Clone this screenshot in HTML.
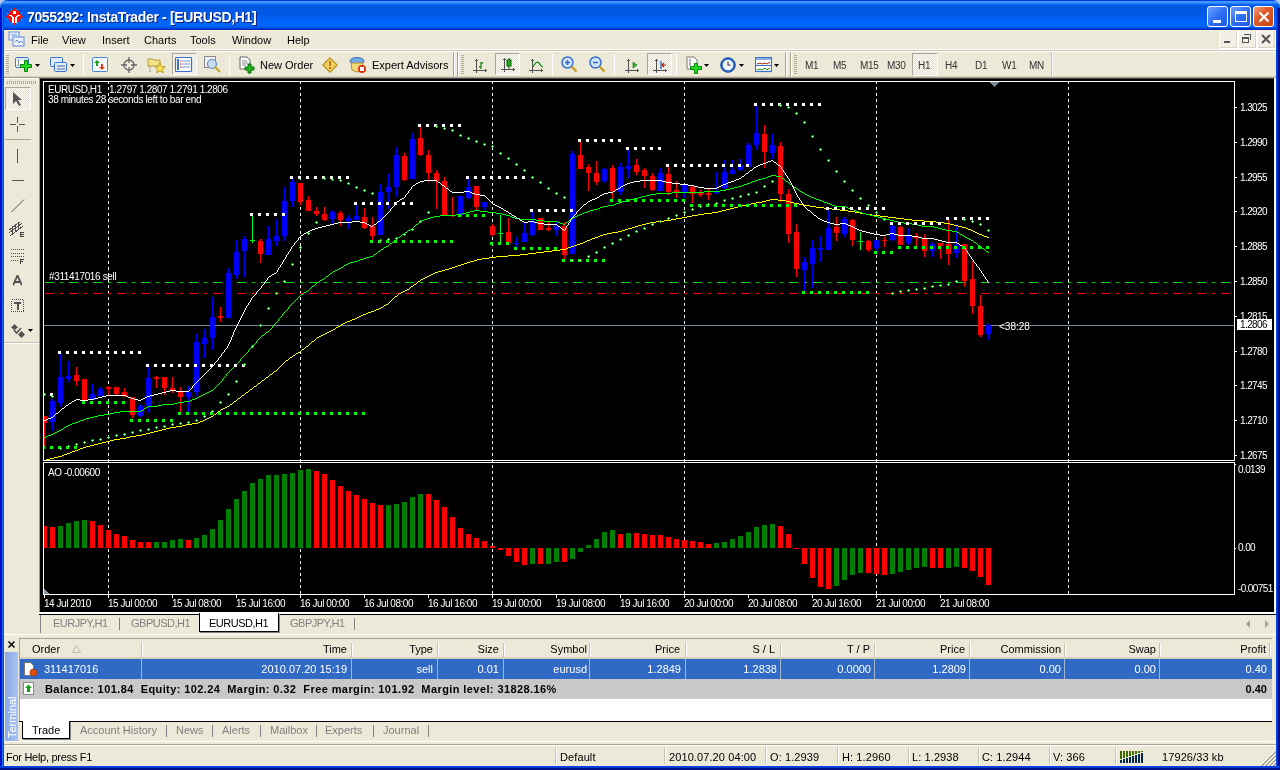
<!DOCTYPE html>
<html><head><meta charset="utf-8">
<style>
*{box-sizing:border-box}
html,body{margin:0;padding:0;width:1280px;height:770px;overflow:hidden;background:#ECE9D8;font-family:"Liberation Sans",sans-serif;font-size:11px;color:#000}
.a{position:absolute}
#title{left:0;top:0;width:1280px;height:30px;border-radius:7px 7px 0 0;background:linear-gradient(#0040E0 0,#0040E0 1px,#3D95FF 1px,#3D95FF 3px,#0A6AF8 4px,#0058E0 6px,#0058E6 14px,#0064F8 20px,#0066FF 26px,#0050E8 28px,#0030C0 29px,#0028B8 30px)}
#title .t{left:27px;top:9px;color:#fff;font-weight:bold;font-size:14px;letter-spacing:-0.35px;text-shadow:1px 1px 0 #0A1E7A;white-space:nowrap}
.wb{border:1px solid #fff;border-radius:3px;width:21px;height:21px;top:6px}
.bl{background:linear-gradient(135deg,#6CA0FF 0%,#2D6FF5 50%,#1E5BE0 100%)}
.frL{left:0;top:8px;width:4px;height:762px;background:linear-gradient(90deg,#0010D0 0 2px,#1A6AF0 2px 3px,#0050E0 3px 4px)}
.frR{left:1276px;top:8px;width:4px;height:762px;background:linear-gradient(90deg,#0048F0 0 1px,#0030C0 1px 2px,#001088 2px 4px)}
.frB{left:0;top:766px;width:1280px;height:4px;background:linear-gradient(#0048F0 0 1px,#0038D8 1px 2px,#001088 2px 4px)}
.menu span{position:absolute;top:34px;font-size:11px}
.tb{white-space:nowrap}
.sep{width:1px;height:22px;background:#C5C2B2;border-right:1px solid #fff;top:54px}
.grip{width:3px;height:19px;top:55px;background:repeating-linear-gradient(#B0AC98 0 1px,transparent 1px 2px)}
.pressed{background:repeating-conic-gradient(#FAF9F4 0 25%,#E6E3D6 0 50%) 0 0/2px 2px;border-top:1px solid #ACA899;border-left:1px solid #ACA899;border-bottom:1px solid #fff;border-right:1px solid #fff}
.tf{font-size:11px;color:#000;top:59px}
.gt{color:#808080}
.th span,.tr span{position:absolute;text-align:right;white-space:nowrap}
</style></head><body><div id="wrap" style="position:absolute;left:0;top:0;width:1280px;height:770px;will-change:transform">
<!-- title bar --><div class="a" style="left:0;top:0;width:9px;height:9px;background:#B8C8E8"></div><div class="a" style="left:1271px;top:0;width:9px;height:9px;background:#B8C8E8"></div>
<div class="a" id="title">
 <svg class="a" style="left:6px;top:8px" width="17" height="17" viewBox="0 0 17 17" shape-rendering="crispEdges"><g fill="#F81000"><path d="M5 2h7v1h1v1h1v2h1v5h-1v2h-1v1h-1v1H5v-1H4v-1H3v-2H2V6h1V4h1V3h1z"/><path d="M8 0h1v2H8zM8 15h1v2H8zM0 8h2v1H0zM15 8h2v1h-2zM3 2h1v1H3zM13 2h1v1h-1zM3 14h1v1H3zM13 14h1v1h-1z"/></g><g fill="#FF7A20"><path d="M1 5h1v1H1zM15 5h1v1h-1zM1 11h1v1H1zM15 11h1v1h-1zM5 1h1v1H5zM11 1h1v1h-1zM5 15h1v1H5zM11 15h1v1h-1z"/></g><rect x="7" y="3" width="3" height="3" fill="#fff"/><path d="M3 7h3v1h1v1h1v6H6V9H5V8H3zM14 7h-3v1h-1v1H9v6h2V9h1V8h2z" fill="#fff"/></svg>
 <div class="a t">7055292: InstaTrader - [EURUSD,H1]</div>
 <div class="a wb bl" style="left:1207px"><div class="a" style="left:5px;top:13px;width:8px;height:3px;background:#fff"></div></div>
 <div class="a wb bl" style="left:1230px"><div class="a" style="left:4px;top:4px;width:12px;height:11px;border:1px solid #fff;border-top:3px solid #fff"></div></div>
 <div class="a wb" style="left:1253px;background:linear-gradient(135deg,#F0A080 0%,#E05A2A 40%,#C8400F 100%)"><svg class="a" style="left:4px;top:4px" width="12" height="12"><path d="M1.5 1.5L10.5 10.5M10.5 1.5L1.5 10.5" stroke="#fff" stroke-width="2.2"/></svg></div>
</div>
<div class="a frL"></div><div class="a frR"></div><div class="a frB"></div>
<!-- menu bar -->
<div class="a" style="left:4px;top:30px;width:1272px;height:19px;background:#ECE9D8;border-top:1px solid #FFF4D8"></div>
<div class="a" style="left:4px;top:49px;width:1272px;height:1px;background:#fff"></div><div class="a" style="left:4px;top:50px;width:1272px;height:1px;background:#C9C4B0"></div><div class="a" style="left:4px;top:51px;width:1272px;height:1px;background:#fff"></div>
<svg class="a" style="left:8px;top:31px" width="18" height="17"><rect x="1" y="1" width="10" height="8" fill="#EAF2FF" stroke="#5C8AD8"/><rect x="5" y="6" width="11" height="9" fill="#EAF2FF" stroke="#5C8AD8"/><path d="M7 11l2-2 2 3 2-2 2 2" stroke="#5C8AD8" fill="none"/><path d="M3 4h6" stroke="#5C8AD8"/></svg>
<div class="menu">
 <span style="left:31px">File</span><span style="left:62px">View</span><span style="left:102px">Insert</span><span style="left:144px">Charts</span><span style="left:190px">Tools</span><span style="left:232px">Window</span><span style="left:287px">Help</span>
</div>
<!-- mdi buttons -->
<div class="a" style="left:1219px;top:31px;width:57px;height:18px;background:#fff"></div>
<div class="a" style="left:1220px;top:31px;width:17px;height:17px;background:#F1EFE6;border-right:1px solid #D9D5C5;border-bottom:1px solid #D9D5C5"></div>
<div class="a" style="left:1239px;top:31px;width:17px;height:17px;background:#F1EFE6;border-right:1px solid #D9D5C5;border-bottom:1px solid #D9D5C5"></div>
<div class="a" style="left:1258px;top:31px;width:17px;height:17px;background:#F1EFE6;border-right:1px solid #D9D5C5;border-bottom:1px solid #D9D5C5"></div>
<svg class="a" style="left:1220px;top:31px" width="56" height="17" shape-rendering="crispEdges"><rect x="4" y="10" width="6" height="2" fill="#555"/>
<path d="M24 3h7v6h-1V4h-6z" fill="#555"/><rect x="22.5" y="6.5" width="6" height="5" fill="none" stroke="#555"/><rect x="22" y="6" width="7" height="2" fill="#555"/>
<path d="M42 4l8 8M50 4l-8 8" stroke="#555" stroke-width="2" shape-rendering="auto"/></svg>
<!-- toolbar -->
<div class="a" style="left:4px;top:52px;width:1272px;height:25px;background:#ECE9D8;border-bottom:1px solid #D8D2BD"></div>
<div class="a grip" style="left:6px"></div><svg class="a" style="left:15px;top:57px" width="18" height="16"><rect x="0.5" y="0.5" width="13" height="10" rx="1.5" fill="#fff" stroke="#3A78D0"/><rect x="1" y="1" width="12" height="2" fill="#D8E6F8"/><path d="M3.5 3v6M2.5 4l1-1 1 1M2.5 8l1 1 1-1" stroke="#7A90B0" fill="none"/><path d="M9.5 3.5h3v4h4v3h-4v4h-3v-4h-4v-3h4z" fill="#22E022" stroke="#0A800A" stroke-width="1"/></svg><svg class="a" style="left:35px;top:64px" width="5" height="3"><path d="M0 0h5l-2.5 3z" fill="#000"/></svg><svg class="a" style="left:50px;top:57px" width="18" height="16"><rect x="0.5" y="0.5" width="12" height="9" rx="1" fill="#DDEBFB" stroke="#3A72C9"/><rect x="4.5" y="5.5" width="12" height="9" rx="1" fill="#DDEBFB" stroke="#3A72C9"/><path d="M7 9h8M7 12h8" stroke="#4A6A9A"/></svg><svg class="a" style="left:70px;top:64px" width="5" height="3"><path d="M0 0h5l-2.5 3z" fill="#000"/></svg><div class="a sep" style="left:83px"></div><svg class="a" style="left:92px;top:57px" width="17" height="16"><rect x="0.5" y="0.5" width="15" height="14" rx="1" fill="#F4F8FF" stroke="#4C86D8"/><path d="M5 3l3 3H6v3H4V6H2z" fill="#18A018"/><path d="M10 13l-3-3h2V7h2v3h2z" fill="#E04020"/></svg><svg class="a" style="left:121px;top:57px" width="16" height="16"><circle cx="8" cy="8" r="5" fill="none" stroke="#666" stroke-width="1.3"/><path d="M8 0v6M8 10v6M0 8h6M10 8h6" stroke="#666" stroke-width="1.3"/></svg><svg class="a" style="left:147px;top:56px" width="19" height="18"><path d="M1 3h5l1 1h6v6H1z" fill="#F5E08A" stroke="#B59A3A"/><path d="M3 11v6" stroke="#666" stroke-dasharray="1 1"/><path d="M13 7l1.6 3.4 3.6.4-2.7 2.4.8 3.6-3.3-1.9-3.3 1.9.8-3.6-2.7-2.4 3.6-.4z" fill="#F8E050" stroke="#B08A10" stroke-width=".8"/></svg><div class="a pressed" style="left:172px;top:53px;width:25px;height:22px"></div><svg class="a" style="left:175px;top:57px" width="18" height="16"><rect x="0.5" y="0.5" width="16" height="14" rx="1" fill="#fff" stroke="#3A72C9" stroke-width="1.2"/><rect x="2" y="2" width="2" height="11" fill="#3A72C9"/><path d="M6 4h9M6 7h9M6 10h9" stroke="#7A9AD0"/><path d="M5 4h1M5 7h1M5 10h1" stroke="#D02020"/></svg><svg class="a" style="left:204px;top:56px" width="18" height="18"><rect x="0.5" y="0.5" width="11" height="11" fill="#EEF" stroke="#888"/><circle cx="8" cy="8" r="4.5" fill="#C8DAF0" stroke="#6A8AB8" stroke-width="1.2"/><path d="M11 11l5 5" stroke="#C8A020" stroke-width="2"/></svg><div class="a sep" style="left:229px"></div><svg class="a" style="left:239px;top:56px" width="17" height="18"><path d="M1 1h7l3 3v9H1z" fill="#fff" stroke="#666"/><path d="M3 5h5M3 7h6M3 9h4" stroke="#888"/><path d="M9 8h3v3h3v3h-3v3H9v-3H6v-3h3z" fill="#1DB31D" stroke="#0A700A"/></svg><div class="a tf" style="left:260px">New Order</div><svg class="a" style="left:322px;top:57px" width="16" height="16"><path d="M8 0.8L15.2 8 8 15.2 0.8 8z" fill="#F2D060" stroke="#B8901A" stroke-width="1.2"/><path d="M8 4v5" stroke="#A05010" stroke-width="1.4"/><circle cx="8" cy="11" r="1" fill="#A05010"/></svg><svg class="a" style="left:349px;top:56px" width="18" height="18"><ellipse cx="8" cy="5" rx="7" ry="3.5" fill="#6FA8E8" stroke="#3A6AB0"/><path d="M2 7l1 7 5 2 5-2 1-7z" fill="#F2D878" stroke="#B09030"/><circle cx="13" cy="13" r="4" fill="#E03010"/><rect x="11" y="11" width="4" height="4" fill="#fff"/></svg><div class="a tf" style="left:372px">Expert Advisors</div><div class="a" style="left:453px;top:52px;width:1px;height:25px;background:#A7A492"></div><div class="a" style="left:454px;top:52px;width:1px;height:25px;background:#fff"></div><div class="a" style="left:457px;top:52px;width:1px;height:25px;background:#A7A492"></div><div class="a" style="left:458px;top:52px;width:1px;height:25px;background:#fff"></div><div class="a grip" style="left:461px"></div><svg class="a" style="left:473px;top:58px" width="15" height="15"><g shape-rendering="crispEdges"><path d="M3 1h1v14H3zM0 12h14v1H0zM2 2h3v1H2zM12 11h1v3h-1z" fill="#505050"/></g><path d="M8 4v7M6 9h2M8 5h2" stroke="#1A8A1A" stroke-width="1.3"/></svg><div class="a pressed" style="left:495px;top:53px;width:25px;height:22px"></div><svg class="a" style="left:501px;top:57px" width="15" height="16"><g shape-rendering="crispEdges"><path d="M3 1h1v14H3zM0 12h14v1H0zM2 2h3v1H2zM12 11h1v3h-1z" fill="#505050"/></g><path d="M8 1v11" stroke="#0A5A0A"/><rect x="6" y="3" width="4" height="6" fill="#22B022" stroke="#0A5A0A"/></svg><svg class="a" style="left:529px;top:58px" width="15" height="15"><g shape-rendering="crispEdges"><path d="M3 1h1v14H3zM0 12h14v1H0zM2 2h3v1H2zM12 11h1v3h-1z" fill="#505050"/></g><path d="M4 9C6 5 8 3 10 5s2 4 4 4" fill="none" stroke="#1A8A1A" stroke-width="1.2"/></svg><div class="a sep" style="left:552px"></div><svg class="a" style="left:561px;top:56px" width="17" height="18"><circle cx="6.5" cy="6.5" r="5.5" fill="#CFE3FA" stroke="#2E6CC8" stroke-width="1.4"/><path d="M4 6.5h5M6.5 4v5" stroke="#2E6CC8" stroke-width="1.5"/><path d="M10.5 10.5l5 5" stroke="#C8A020" stroke-width="2.4"/></svg><svg class="a" style="left:589px;top:56px" width="17" height="18"><circle cx="6.5" cy="6.5" r="5.5" fill="#CFE3FA" stroke="#2E6CC8" stroke-width="1.4"/><path d="M4 6.5h5" stroke="#2E6CC8" stroke-width="1.5"/><path d="M10.5 10.5l5 5" stroke="#C8A020" stroke-width="2.4"/></svg><div class="a sep" style="left:614px"></div><svg class="a" style="left:625px;top:58px" width="15" height="15"><g shape-rendering="crispEdges"><path d="M3 1h1v14H3zM0 12h14v1H0zM2 2h3v1H2zM12 11h1v3h-1z" fill="#505050"/></g><path d="M8 4l4 3-4 3z" fill="#2AB02A" stroke="#0A700A" stroke-width=".6"/></svg><div class="a pressed" style="left:647px;top:53px;width:25px;height:22px"></div><svg class="a" style="left:653px;top:58px" width="15" height="15"><g shape-rendering="crispEdges"><path d="M3 1h1v14H3zM0 12h14v1H0zM2 2h3v1H2zM12 11h1v3h-1z" fill="#505050"/></g><path d="M8 3v8" stroke="#2060C0" stroke-width="1.3"/><path d="M13 7H9.5M11 5l-2 2 2 2" fill="none" stroke="#C02010" stroke-width="1.2"/></svg><div class="a sep" style="left:676px"></div><svg class="a" style="left:686px;top:56px" width="17" height="18"><path d="M1 1h7l3 3v9H1z" fill="#fff" stroke="#777"/><path d="M4 3v7M3 4h2M3 8h2" stroke="#888"/><path d="M8.5 7.5h3v3h4v3h-4v4h-3v-4h-4v-3h4z" fill="#22E022" stroke="#0A800A"/></svg><svg class="a" style="left:704px;top:64px" width="5" height="3"><path d="M0 0h5l-2.5 3z" fill="#000"/></svg><svg class="a" style="left:720px;top:57px" width="17" height="17"><circle cx="8" cy="8" r="7.3" fill="#2E6ED0" stroke="#1A4A9A"/><circle cx="8" cy="8" r="5.2" fill="#F4F6FA"/><path d="M8 4.5V8h2.5" stroke="#333" stroke-width="1.1" fill="none"/></svg><svg class="a" style="left:739px;top:64px" width="5" height="3"><path d="M0 0h5l-2.5 3z" fill="#000"/></svg><svg class="a" style="left:755px;top:57px" width="17" height="16"><rect x="0.5" y="0.5" width="16" height="14" fill="#fff" stroke="#3A72C9" stroke-width="1.2"/><rect x="1" y="1" width="15" height="2" fill="#8AB0E8"/><path d="M1 8.5h15" stroke="#3A72C9"/><path d="M2 7l3-1 2 1 3-1 2 1 3-2" stroke="#B02010" fill="none"/><path d="M2 13l3-1 2 1 3-2 2 2 3-2" stroke="#209020" fill="none"/></svg><svg class="a" style="left:774px;top:64px" width="5" height="3"><path d="M0 0h5l-2.5 3z" fill="#000"/></svg><div class="a" style="left:785px;top:52px;width:1px;height:25px;background:#A7A492"></div><div class="a" style="left:786px;top:52px;width:1px;height:25px;background:#fff"></div><div class="a" style="left:790px;top:52px;width:1px;height:25px;background:#A7A492"></div><div class="a" style="left:791px;top:52px;width:1px;height:25px;background:#fff"></div><div class="a grip" style="left:794px"></div><div class="a pressed" style="left:912px;top:53px;width:26px;height:23px"></div><div class="a tf" style="left:805px;color:#333;font-size:10px;letter-spacing:-0.3px;top:60px">M1</div><div class="a tf" style="left:833px;color:#333;font-size:10px;letter-spacing:-0.3px;top:60px">M5</div><div class="a tf" style="left:860px;color:#333;font-size:10px;letter-spacing:-0.3px;top:60px">M15</div><div class="a tf" style="left:887px;color:#333;font-size:10px;letter-spacing:-0.3px;top:60px">M30</div><div class="a tf" style="left:918px;color:#333;font-size:10px;letter-spacing:-0.3px;top:60px">H1</div><div class="a tf" style="left:945px;color:#333;font-size:10px;letter-spacing:-0.3px;top:60px">H4</div><div class="a tf" style="left:975px;color:#333;font-size:10px;letter-spacing:-0.3px;top:60px">D1</div><div class="a tf" style="left:1002px;color:#333;font-size:10px;letter-spacing:-0.3px;top:60px">W1</div><div class="a tf" style="left:1029px;color:#333;font-size:10px;letter-spacing:-0.3px;top:60px">MN</div><div class="a" style="left:1051px;top:52px;width:1px;height:25px;background:#C5C2B2"></div><div class="a" style="left:1052px;top:52px;width:1px;height:25px;background:#fff"></div>
<!-- left toolbar -->
<div class="a" style="left:4px;top:77px;width:1272px;height:1px;background:#A7A492"></div>
<div class="a" style="left:4px;top:78px;width:35px;height:262px;background:#ECE9D8;border-top:1px solid #fff"></div>
<div class="a" style="left:7px;top:81px;width:30px;height:3px;background:repeating-linear-gradient(90deg,#B0AC98 0 1px,transparent 1px 2px)"></div><div class="a pressed" style="left:5px;top:87px;width:26px;height:23px"></div><svg class="a" style="left:12px;top:91px" width="10" height="16"><path d="M1 1v12l3-3 3 5 2-1-3-5h4z" fill="#555"/></svg><svg class="a" style="left:10px;top:117px" width="16" height="16"><path d="M7.5 0v6M7.5 9v6M0 7.5h6M9 7.5h6" stroke="#555"/></svg><div class="a" style="left:5px;top:139px;width:26px;height:1px;background:#A7A492"></div><div class="a" style="left:17px;top:149px;width:1px;height:14px;background:#555"></div><div class="a" style="left:12px;top:180px;width:12px;height:1px;background:#555"></div><svg class="a" style="left:11px;top:199px" width="14" height="14"><path d="M0.5 13L13 0.5" stroke="#555"/></svg><svg class="a" style="left:9px;top:221px" width="17" height="18" shape-rendering="crispEdges"><path d="M0 12L13 2M1 15L14 5M0 9L11 1" stroke="#505050" stroke-width="1"/><path d="M3.5 5v8M6.5 3v8M9.5 1v8" stroke="#505050"/><path d="M11 11h4v1h-3v1h3v1h-3v1h3v1h-4z" fill="#404040"/></svg><svg class="a" style="left:10px;top:248px" width="16" height="17" shape-rendering="crispEdges"><path d="M1 1.5h13M1 5.5h13M1 8.5h13M1 12.5h8" stroke="#505050" stroke-dasharray="1 1"/><path d="M10 11h4v1h-3v1h2v1h-2v2h-1z" fill="#404040"/></svg><svg class="a" style="left:13px;top:275px" width="9" height="11"><path d="M0 10.5L4.5 0.5 9 10.5M2 7h5" stroke="#505050" stroke-width="1.8" fill="none"/></svg><svg class="a" style="left:11px;top:298px" width="14" height="15" shape-rendering="crispEdges"><rect x="0.5" y="1.5" width="12" height="12" fill="none" stroke="#505050" stroke-dasharray="1 1"/><path d="M3 4h7v2H7.5v6h-2V6H3z" fill="#505050"/></svg><svg class="a" style="left:11px;top:324px" width="23" height="14"><path d="M3.5 0L7 3.5 3.5 6 0 3.5z M10.5 7L14 10.5 10.5 14 7 10.5z" fill="#505050"/><path d="M3 6l2.5 3 4.5-5" stroke="#505050" fill="none" stroke-width="1.5"/><path d="M17 5h5l-2.5 3z" fill="#000"/></svg><div class="a" style="left:4px;top:342px;width:35px;height:1px;background:#C5C2B2"></div><div class="a" style="left:4px;top:343px;width:35px;height:1px;background:#fff"></div>
<!-- chart frame -->
<div class="a" style="left:39px;top:78px;width:1237px;height:537px;background:#000;border-left:1px solid #9D9D92;border-top:1px solid #404040;"></div>
<div class="a" style="left:1274px;top:78px;width:2px;height:536px;background:linear-gradient(90deg,#F4F2E6 0 1px,#fff 1px)"></div>
<div class="a" style="left:39px;top:612px;width:1237px;height:2px;background:#fff"></div>
<div class="a" style="left:39px;top:614px;width:1237px;height:1px;background:#000"></div>
<svg width="1280" height="770" style="position:absolute;left:0;top:0;will-change:transform" shape-rendering="crispEdges"><rect x="41" y="79" width="1233" height="533" fill="#000"/><path d="M43.5 81.5H1234.5V460.5H43.5Z M43.5 462.5H1234.5V594.5H43.5Z" fill="none" stroke="#fff" stroke-width="1"/><line x1="108.5" y1="82" x2="108.5" y2="594" stroke="#fff" stroke-width="1" stroke-dasharray="3 3" stroke-dashoffset="-5"/><line x1="300.5" y1="82" x2="300.5" y2="594" stroke="#fff" stroke-width="1" stroke-dasharray="3 3" stroke-dashoffset="-5"/><line x1="492.5" y1="82" x2="492.5" y2="594" stroke="#fff" stroke-width="1" stroke-dasharray="3 3" stroke-dashoffset="-5"/><line x1="684.5" y1="82" x2="684.5" y2="594" stroke="#fff" stroke-width="1" stroke-dasharray="3 3" stroke-dashoffset="-5"/><line x1="876.5" y1="82" x2="876.5" y2="594" stroke="#fff" stroke-width="1" stroke-dasharray="3 3" stroke-dashoffset="-5"/><line x1="1068.5" y1="82" x2="1068.5" y2="594" stroke="#fff" stroke-width="1" stroke-dasharray="3 3" stroke-dashoffset="-5"/><clipPath id="cm"><rect x="44" y="82" width="1190" height="378"/></clipPath><clipPath id="ca"><rect x="44" y="463" width="1190" height="131"/></clipPath><g clip-path="url(#cm)"><line x1="45" y1="282.5" x2="1234" y2="282.5" stroke="#00E000" stroke-dasharray="9 6 3 6"/><line x1="45" y1="293.5" x2="1234" y2="293.5" stroke="#FF0000" stroke-dasharray="9 6 3 6"/><line x1="44" y1="325.5" x2="1234" y2="325.5" stroke="#778899"/><path d="M52 399h1V431h-1zM60 353h1V407h-1zM68 361h1V382h-1zM92 384h1V400h-1zM100 387h1V396h-1zM140 404h1V417h-1zM148 367h1V413h-1zM188 386h1V412h-1zM196 334h1V396h-1zM204 329h1V358h-1zM212 297h1V350h-1zM228 268h1V318h-1zM236 240h1V279h-1zM244 236h1V277h-1zM268 226h1V255h-1zM276 219h1V246h-1zM284 187h1V241h-1zM292 179h1V207h-1zM332 210h1V224h-1zM348 215h1V229h-1zM356 204h1V220h-1zM380 184h1V235h-1zM388 174h1V209h-1zM396 147h1V197h-1zM412 133h1V179h-1zM460 196h1V216h-1zM468 179h1V199h-1zM484 202h1V210h-1zM516 237h1V248h-1zM524 222h1V242h-1zM532 212h1V236h-1zM556 222h1V236h-1zM572 151h1V254h-1zM604 168h1V183h-1zM620 163h1V195h-1zM628 149h1V178h-1zM660 168h1V191h-1zM684 184h1V198h-1zM716 172h1V194h-1zM724 160h1V189h-1zM732 160h1V174h-1zM740 159h1V171h-1zM748 143h1V167h-1zM756 106h1V150h-1zM772 134h1V159h-1zM804 257h1V292h-1zM812 240h1V288h-1zM820 236h1V262h-1zM828 209h1V250h-1zM844 217h1V237h-1zM876 240h1V251h-1zM892 225h1V241h-1zM908 228h1V245h-1zM932 242h1V257h-1zM956 224h1V258h-1zM988 324h1V340h-1zM50 401h5V422h-5zM58 377h5V403h-5zM66 376h5V379h-5zM90 394h5V400h-5zM98 389h5V396h-5zM138 406h5V416h-5zM146 378h5V406h-5zM186 392h5V397h-5zM194 342h5V392h-5zM202 338h5V344h-5zM210 317h5V338h-5zM226 273h5V318h-5zM234 252h5V275h-5zM242 239h5V251h-5zM266 239h5V255h-5zM274 236h5V241h-5zM282 201h5V236h-5zM290 182h5V201h-5zM330 212h5V219h-5zM346 218h5V221h-5zM354 216h5V220h-5zM378 192h5V235h-5zM386 187h5V192h-5zM394 155h5V187h-5zM410 139h5V179h-5zM458 196h5V215h-5zM466 187h5V198h-5zM482 202h5V207h-5zM514 243h5V244h-5zM522 233h5V242h-5zM530 221h5V235h-5zM554 226h5V230h-5zM570 154h5V254h-5zM602 169h5V181h-5zM618 167h5V192h-5zM626 166h5V169h-5zM658 173h5V191h-5zM682 185h5V192h-5zM714 191h5V193h-5zM722 172h5V188h-5zM730 170h5V174h-5zM738 165h5V170h-5zM746 145h5V167h-5zM754 133h5V145h-5zM770 145h5V153h-5zM802 262h5V270h-5zM810 248h5V264h-5zM818 248h5V250h-5zM826 228h5V250h-5zM842 219h5V234h-5zM874 240h5V248h-5zM890 226h5V240h-5zM906 235h5V243h-5zM930 244h5V251h-5zM954 245h5V253h-5zM986 325h5V334h-5z" fill="#0000FF"/><path d="M44 416h1V447h-1zM76 367h1V386h-1zM84 379h1V400h-1zM108 386h1V395h-1zM116 387h1V395h-1zM124 388h1V397h-1zM132 397h1V418h-1zM156 376h1V388h-1zM164 377h1V395h-1zM172 377h1V393h-1zM180 387h1V412h-1zM220 307h1V322h-1zM260 239h1V263h-1zM300 183h1V205h-1zM308 196h1V211h-1zM316 207h1V216h-1zM324 207h1V221h-1zM340 211h1V226h-1zM364 208h1V229h-1zM372 217h1V240h-1zM404 153h1V181h-1zM420 127h1V156h-1zM428 150h1V182h-1zM436 170h1V209h-1zM444 177h1V216h-1zM452 197h1V217h-1zM476 186h1V210h-1zM492 224h1V236h-1zM508 218h1V243h-1zM540 218h1V230h-1zM548 222h1V231h-1zM564 222h1V259h-1zM580 141h1V169h-1zM588 164h1V191h-1zM596 161h1V185h-1zM612 165h1V199h-1zM636 159h1V175h-1zM644 168h1V188h-1zM652 173h1V191h-1zM668 166h1V195h-1zM676 181h1V198h-1zM692 185h1V203h-1zM700 190h1V197h-1zM708 188h1V200h-1zM764 125h1V168h-1zM780 142h1V202h-1zM788 189h1V243h-1zM796 224h1V277h-1zM836 217h1V241h-1zM852 219h1V246h-1zM868 240h1V252h-1zM884 237h1V247h-1zM900 226h1V245h-1zM916 233h1V246h-1zM924 234h1V257h-1zM940 243h1V259h-1zM948 219h1V265h-1zM964 244h1V287h-1zM972 261h1V314h-1zM980 295h1V337h-1zM42 416h5V423h-5zM74 375h5V381h-5zM82 379h5V400h-5zM106 387h5V389h-5zM114 387h5V394h-5zM122 392h5V396h-5zM130 397h5V415h-5zM154 377h5V379h-5zM162 377h5V388h-5zM170 388h5V391h-5zM178 391h5V397h-5zM218 316h5V318h-5zM258 241h5V254h-5zM298 183h5V202h-5zM306 200h5V211h-5zM314 211h5V214h-5zM322 214h5V220h-5zM338 213h5V220h-5zM362 217h5V228h-5zM370 226h5V236h-5zM402 156h5V180h-5zM418 138h5V155h-5zM426 155h5V173h-5zM434 173h5V181h-5zM442 181h5V215h-5zM450 215h5V216h-5zM474 186h5V207h-5zM490 226h5V235h-5zM506 232h5V243h-5zM538 218h5V230h-5zM546 228h5V230h-5zM562 226h5V255h-5zM578 155h5V169h-5zM586 167h5V173h-5zM594 173h5V182h-5zM610 168h5V191h-5zM634 165h5V172h-5zM642 170h5V176h-5zM650 176h5V190h-5zM666 174h5V192h-5zM674 190h5V193h-5zM690 187h5V194h-5zM698 193h5V195h-5zM706 193h5V195h-5zM762 134h5V152h-5zM778 146h5V194h-5zM786 194h5V234h-5zM794 232h5V269h-5zM834 227h5V233h-5zM850 220h5V240h-5zM866 241h5V250h-5zM882 240h5V241h-5zM898 227h5V245h-5zM914 236h5V238h-5zM922 239h5V251h-5zM938 243h5V246h-5zM946 244h5V254h-5zM962 244h5V281h-5zM970 279h5V306h-5zM978 306h5V335h-5z" fill="#FF0000"/><path d="M252 215h1V243h-1zM500 215h1V243h-1zM860 232h1V250h-1zM250 240h5v1h-5zM498 233h5v1h-5zM858 241h5v1h-5z" fill="#00FF00"/><path d="M270 374h2v1h-2zM664 220h7v1h-7zM912 220h12v1h-12zM751 203h5v1h-5zM794 203h5v1h-5zM166 428h4v1h-4zM770 199h8v1h-8zM209 417h2v1h-2zM698 214h6v1h-6zM866 214h6v1h-6zM656 221h8v1h-8zM924 221h12v1h-12zM186 424h6v1h-6zM607 233h5v1h-5zM977 233h2v1h-2zM477 259h5v1h-5zM632 227h3v1h-3zM962 227h4v1h-4zM455 266h3v1h-3zM106 441h4v1h-4zM650 222h6v1h-6zM936 222h8v1h-8zM230 404h2v1h-2zM355 318h2v1h-2zM126 437h4v1h-4zM552 250h8v1h-8zM585 241h2v1h-2zM214 414h2v1h-2zM704 213h8v1h-8zM860 213h6v1h-6zM746 204h5v1h-5zM799 204h5v1h-5zM734 207h4v1h-4zM816 207h8v1h-8zM234 401h2v1h-2zM227 406h2v1h-2zM433 273h2v1h-2zM154 431h4v1h-4zM738 206h4v1h-4zM810 206h6v1h-6zM238 398h2v1h-2zM580 243h3v1h-3zM170 427h6v1h-6zM756 202h6v1h-6zM790 202h4v1h-4zM467 262h3v1h-3zM638 225h4v1h-4zM954 225h4v1h-4zM612 232h6v1h-6zM975 232h2v1h-2zM242 395h2v1h-2zM327 332h2v1h-2zM285 361h1v1h-1zM528 253h8v1h-8zM595 237h3v1h-3zM987 237h2v1h-2zM200 421h3v1h-3zM676 218h6v1h-6zM896 218h8v1h-8zM726 209h4v1h-4zM832 209h8v1h-8zM766 200h4v1h-4zM778 200h8v1h-8zM692 215h6v1h-6zM872 215h8v1h-8zM438 271h4v1h-4zM289 358h1v1h-1zM628 228h4v1h-4zM966 228h2v1h-2zM94 444h4v1h-4zM323 334h2v1h-2zM687 216h5v1h-5zM880 216h8v1h-8zM192 423h6v1h-6zM78 449h2v1h-2zM474 260h3v1h-3zM635 226h3v1h-3zM958 226h4v1h-4zM646 223h4v1h-4zM944 223h6v1h-6zM544 251h8v1h-8zM293 355h2v1h-2zM622 230h3v1h-3zM971 230h2v1h-2zM282 364h1v1h-1zM520 254h8v1h-8zM671 219h5v1h-5zM904 219h8v1h-8zM120 438h6v1h-6zM730 208h4v1h-4zM824 208h8v1h-8zM142 434h4v1h-4zM742 205h4v1h-4zM804 205h6v1h-6zM722 210h4v1h-4zM840 210h8v1h-8zM350 320h2v1h-2zM218 411h2v1h-2zM62 455h2v1h-2zM265 378h1v1h-1zM536 252h8v1h-8zM381 307h2v1h-2zM211 416h2v1h-2zM508 255h12v1h-12zM246 392h2v1h-2zM718 211h4v1h-4zM848 211h7v1h-7zM83 447h3v1h-3zM577 244h3v1h-3zM409 288h1v1h-1zM223 408h2v1h-2zM269 375h1v1h-1zM429 275h2v1h-2zM386 304h2v1h-2zM376 309h3v1h-3zM250 389h2v1h-2zM366 313h2v1h-2zM461 264h3v1h-3zM592 238h3v1h-3zM712 212h6v1h-6zM855 212h5v1h-5zM603 234h4v1h-4zM979 234h3v1h-3zM762 201h4v1h-4zM786 201h4v1h-4zM67 453h3v1h-3zM435 272h3v1h-3zM50 458h4v1h-4zM618 231h4v1h-4zM973 231h2v1h-2zM361 315h2v1h-2zM296 353h2v1h-2zM114 439h6v1h-6zM319 336h2v1h-2zM72 451h3v1h-3zM312 341h2v1h-2zM566 248h2v1h-2zM598 236h2v1h-2zM984 236h3v1h-3zM301 350h1v1h-1zM496 256h12v1h-12zM682 217h5v1h-5zM888 217h8v1h-8zM625 229h3v1h-3zM968 229h3v1h-3zM162 429h4v1h-4zM80 448h3v1h-3zM445 269h4v1h-4zM393 298h1v1h-1zM207 418h2v1h-2zM642 224h4v1h-4zM950 224h4v1h-4zM413 285h1v1h-1zM102 442h4v1h-4zM273 372h1v1h-1zM571 246h3v1h-3zM405 290h2v1h-2zM338 326h2v1h-2zM397 295h1v1h-1zM458 265h3v1h-3zM254 386h2v1h-2zM130 436h6v1h-6zM203 420h2v1h-2zM277 369h1v1h-1zM587 240h3v1h-3zM182 425h4v1h-4zM150 432h4v1h-4zM452 267h3v1h-3zM431 274h2v1h-2zM482 258h7v1h-7zM110 440h4v1h-4zM90 445h4v1h-4zM357 317h2v1h-2zM583 242h2v1h-2zM176 426h6v1h-6zM560 249h6v1h-6zM316 338h1v1h-1zM489 257h7v1h-7zM136 435h6v1h-6zM442 270h3v1h-3zM470 261h4v1h-4zM98 443h4v1h-4zM280 366h1v1h-1zM325 333h2v1h-2zM75 450h3v1h-3zM302 349h2v1h-2zM295 354h1v1h-1zM368 312h3v1h-3zM464 263h3v1h-3zM401 292h2v1h-2zM347 321h3v1h-3zM58 456h4v1h-4zM306 346h2v1h-2zM335 328h1v1h-1zM198 422h2v1h-2zM414 284h2v1h-2zM233 402h1v1h-1zM86 446h4v1h-4zM158 430h4v1h-4zM407 289h2v1h-2zM225 407h2v1h-2zM427 276h2v1h-2zM256 385h1v1h-1zM388 303h1v1h-1zM217 412h1v1h-1zM418 281h2v1h-2zM352 319h3v1h-3zM237 399h1v1h-1zM64 454h3v1h-3zM46 459h4v1h-4zM260 382h1v1h-1zM423 278h2v1h-2zM241 396h1v1h-1zM321 335h2v1h-2zM568 247h3v1h-3zM363 314h3v1h-3zM284 362h1v1h-1zM379 308h2v1h-2zM411 286h2v1h-2zM403 291h2v1h-2zM274 371h2v1h-2zM574 245h3v1h-3zM221 409h2v1h-2zM395 296h2v1h-2zM384 305h2v1h-2zM205 419h2v1h-2zM264 379h1v1h-1zM449 268h3v1h-3zM345 322h2v1h-2zM146 433h4v1h-4zM54 457h4v1h-4zM245 393h1v1h-1zM268 376h1v1h-1zM590 239h2v1h-2zM317 337h2v1h-2zM44 460h2v1h-2zM600 235h3v1h-3zM982 235h2v1h-2zM371 311h3v1h-3zM399 293h2v1h-2zM336 327h2v1h-2zM392 299h1v1h-1zM341 324h2v1h-2zM333 329h2v1h-2zM279 367h1v1h-1zM390 301h1v1h-1zM232 403h1v1h-1zM236 400h1v1h-1zM305 347h1v1h-1zM329 331h2v1h-2zM286 360h2v1h-2zM425 277h2v1h-2zM417 282h1v1h-1zM298 352h2v1h-2zM258 383h2v1h-2zM421 279h2v1h-2zM216 413h1v1h-1zM262 380h2v1h-2zM410 287h1v1h-1zM220 410h1v1h-1zM309 344h1v1h-1zM70 452h2v1h-2zM290 357h2v1h-2zM343 323h2v1h-2zM331 330h2v1h-2zM374 310h2v1h-2zM394 297h1v1h-1zM266 377h2v1h-2zM281 365h1v1h-1zM398 294h1v1h-1zM288 359h1v1h-1zM300 351h1v1h-1zM249 390h1v1h-1zM253 387h1v1h-1zM416 283h1v1h-1zM311 342h1v1h-1zM292 356h1v1h-1zM315 339h1v1h-1zM304 348h1v1h-1zM308 345h1v1h-1zM272 373h1v1h-1zM257 384h1v1h-1zM389 302h1v1h-1zM420 280h1v1h-1zM261 381h1v1h-1zM276 370h1v1h-1zM383 306h1v1h-1zM240 397h1v1h-1zM244 394h1v1h-1zM248 391h1v1h-1zM229 405h1v1h-1zM283 363h1v1h-1zM310 343h1v1h-1zM314 340h1v1h-1zM391 300h1v1h-1zM340 325h1v1h-1zM252 388h1v1h-1zM213 415h1v1h-1zM359 316h2v1h-2zM278 368h1v1h-1z" fill="#FFFF00"/><path d="M462 213h4v1h-4zM496 213h6v1h-6zM582 213h2v1h-2zM862 213h4v1h-4zM197 397h2v1h-2zM201 395h2v1h-2zM672 192h32v1h-32zM802 192h2v1h-2zM287 309h1v1h-1zM178 402h6v1h-6zM420 221h2v1h-2zM544 221h14v1h-14zM568 221h1v1h-1zM894 221h4v1h-4zM750 182h2v1h-2zM788 182h1v1h-1zM456 214h6v1h-6zM502 214h4v1h-4zM579 214h3v1h-3zM866 214h4v1h-4zM430 217h4v1h-4zM512 217h3v1h-3zM573 217h2v1h-2zM878 217h4v1h-4zM646 195h4v1h-4zM807 195h2v1h-2zM264 334h1v1h-1zM419 222h1v1h-1zM558 222h2v1h-2zM566 222h2v1h-2zM898 222h6v1h-6zM86 418h4v1h-4zM747 183h3v1h-3zM789 183h1v1h-1zM148 406h10v1h-10zM162 404h12v1h-12zM466 212h4v1h-4zM488 212h8v1h-8zM584 212h3v1h-3zM859 212h3v1h-3zM630 199h4v1h-4zM816 199h3v1h-3zM268 331h1v1h-1zM120 411h21v1h-21zM440 215h16v1h-16zM506 215h4v1h-4zM577 215h2v1h-2zM870 215h4v1h-4zM418 223h1v1h-1zM560 223h3v1h-3zM565 223h1v1h-1zM904 223h8v1h-8zM656 193h16v1h-16zM804 193h1v1h-1zM70 424h2v1h-2zM144 408h2v1h-2zM424 219h3v1h-3zM520 219h16v1h-16zM570 219h2v1h-2zM886 219h4v1h-4zM255 343h1v1h-1zM638 197h4v1h-4zM811 197h3v1h-3zM416 224h2v1h-2zM563 224h2v1h-2zM912 224h6v1h-6zM704 191h16v1h-16zM800 191h2v1h-2zM771 175h5v1h-5zM94 416h4v1h-4zM184 401h6v1h-6zM232 368h1v1h-1zM333 271h2v1h-2zM408 230h2v1h-2zM946 230h6v1h-6zM252 346h1v1h-1zM422 220h2v1h-2zM536 220h8v1h-8zM569 220h1v1h-1zM890 220h4v1h-4zM393 241h1v1h-1zM973 241h1v1h-1zM363 258h3v1h-3zM276 322h1v1h-1zM279 318h1v1h-1zM341 267h2v1h-2zM299 296h1v1h-1zM619 202h3v1h-3zM824 202h3v1h-3zM415 225h1v1h-1zM918 225h4v1h-4zM600 207h3v1h-3zM846 207h2v1h-2zM346 264h2v1h-2zM303 293h1v1h-1zM427 218h3v1h-3zM515 218h5v1h-5zM572 218h1v1h-1zM882 218h4v1h-4zM378 251h2v1h-2zM986 251h2v1h-2zM738 186h4v1h-4zM793 186h1v1h-1zM337 269h2v1h-2zM603 206h5v1h-5zM835 206h11v1h-11zM414 226h1v1h-1zM922 226h12v1h-12zM271 328h1v1h-1zM634 198h4v1h-4zM814 198h2v1h-2zM192 399h3v1h-3zM762 178h4v1h-4zM782 178h2v1h-2zM396 239h1v1h-1zM969 239h2v1h-2zM377 252h1v1h-1zM988 252h1v1h-1zM48 435h3v1h-3zM158 405h4v1h-4zM98 415h6v1h-6zM720 190h6v1h-6zM799 190h1v1h-1zM221 381h1v1h-1zM650 194h6v1h-6zM805 194h2v1h-2zM224 377h1v1h-1zM350 262h4v1h-4zM244 355h1v1h-1zM744 184h3v1h-3zM790 184h2v1h-2zM642 196h4v1h-4zM809 196h2v1h-2zM211 390h2v1h-2zM726 189h4v1h-4zM797 189h2v1h-2zM407 231h1v1h-1zM952 231h5v1h-5zM401 235h1v1h-1zM962 235h2v1h-2zM104 414h6v1h-6zM413 227h1v1h-1zM934 227h4v1h-4zM398 237h2v1h-2zM965 237h2v1h-2zM470 211h4v1h-4zM480 211h8v1h-8zM587 211h3v1h-3zM856 211h3v1h-3zM66 426h2v1h-2zM282 314h1v1h-1zM474 210h6v1h-6zM590 210h4v1h-4zM854 210h2v1h-2zM239 361h1v1h-1zM434 216h6v1h-6zM510 216h2v1h-2zM575 216h2v1h-2zM874 216h4v1h-4zM207 392h2v1h-2zM405 232h2v1h-2zM957 232h2v1h-2zM412 228h1v1h-1zM938 228h4v1h-4zM317 282h2v1h-2zM758 179h4v1h-4zM784 179h1v1h-1zM63 428h1v1h-1zM734 187h4v1h-4zM794 187h2v1h-2zM114 412h6v1h-6zM594 209h4v1h-4zM851 209h3v1h-3zM322 279h2v1h-2zM768 176h3v1h-3zM776 176h5v1h-5zM755 180h3v1h-3zM785 180h1v1h-1zM616 203h3v1h-3zM827 203h3v1h-3zM374 254h2v1h-2zM247 352h1v1h-1zM626 200h4v1h-4zM819 200h3v1h-3zM386 246h2v1h-2zM980 246h1v1h-1zM78 421h2v1h-2zM410 229h2v1h-2zM942 229h4v1h-4zM227 373h1v1h-1zM370 256h3v1h-3zM402 234h2v1h-2zM960 234h2v1h-2zM348 263h2v1h-2zM622 201h4v1h-4zM822 201h2v1h-2zM390 243h2v1h-2zM976 243h1v1h-1zM294 301h1v1h-1zM339 268h2v1h-2zM383 248h1v1h-1zM982 248h2v1h-2zM174 403h4v1h-4zM394 240h2v1h-2zM971 240h2v1h-2zM83 419h3v1h-3zM608 205h6v1h-6zM832 205h3v1h-3zM141 410h2v1h-2zM203 394h2v1h-2zM381 249h2v1h-2zM984 249h1v1h-1zM262 335h2v1h-2zM55 432h2v1h-2zM216 386h1v1h-1zM59 430h2v1h-2zM146 407h2v1h-2zM286 310h1v1h-1zM360 259h3v1h-3zM752 181h3v1h-3zM786 181h2v1h-2zM598 208h2v1h-2zM848 208h3v1h-3zM72 423h3v1h-3zM324 278h1v1h-1zM278 320h1v1h-1zM281 316h1v1h-1zM344 265h2v1h-2zM304 292h2v1h-2zM335 270h2v1h-2zM242 357h1v1h-1zM742 185h2v1h-2zM792 185h1v1h-1zM190 400h2v1h-2zM354 261h4v1h-4zM266 332h2v1h-2zM199 396h2v1h-2zM289 306h1v1h-1zM51 434h2v1h-2zM270 329h1v1h-1zM90 417h4v1h-4zM730 188h4v1h-4zM796 188h1v1h-1zM61 429h2v1h-2zM110 413h4v1h-4zM328 275h1v1h-1zM388 245h1v1h-1zM978 245h2v1h-2zM234 366h1v1h-1zM320 280h2v1h-2zM254 344h1v1h-1zM309 289h1v1h-1zM301 294h2v1h-2zM231 369h1v1h-1zM332 272h1v1h-1zM366 257h4v1h-4zM278 319h1v1h-1zM312 286h2v1h-2zM75 422h3v1h-3zM46 436h2v1h-2zM273 325h1v1h-1zM80 420h3v1h-3zM766 177h2v1h-2zM781 177h1v1h-1zM246 353h1v1h-1zM257 340h1v1h-1zM284 312h1v1h-1zM57 431h2v1h-2zM218 384h1v1h-1zM389 244h1v1h-1zM977 244h1v1h-1zM226 375h1v1h-1zM229 371h1v1h-1zM249 349h1v1h-1zM296 299h1v1h-1zM397 238h1v1h-1zM967 238h2v1h-2zM44 437h2v1h-2zM53 433h2v1h-2zM358 260h2v1h-2zM238 362h1v1h-1zM241 358h1v1h-1zM614 204h2v1h-2zM830 204h2v1h-2zM261 336h1v1h-1zM288 308h1v1h-1zM236 364h1v1h-1zM256 342h1v1h-1zM326 276h2v1h-2zM311 287h1v1h-1zM380 250h1v1h-1zM985 250h1v1h-1zM226 374h1v1h-1zM315 284h1v1h-1zM68 425h2v1h-2zM404 233h1v1h-1zM959 233h1v1h-1zM319 281h1v1h-1zM291 304h1v1h-1zM248 351h1v1h-1zM272 327h1v1h-1zM330 273h2v1h-2zM213 389h1v1h-1zM233 367h1v1h-1zM256 341h1v1h-1zM280 317h1v1h-1zM275 323h1v1h-1zM298 297h1v1h-1zM384 247h2v1h-2zM981 247h1v1h-1zM376 253h1v1h-1zM259 338h1v1h-1zM248 350h1v1h-1zM195 398h2v1h-2zM283 313h1v1h-1zM220 382h1v1h-1zM143 409h1v1h-1zM240 360h1v1h-1zM209 391h2v1h-2zM243 356h1v1h-1zM251 347h1v1h-1zM228 372h1v1h-1zM306 291h2v1h-2zM392 242h1v1h-1zM974 242h2v1h-2zM310 288h1v1h-1zM223 378h1v1h-1zM293 302h1v1h-1zM215 387h1v1h-1zM235 365h1v1h-1zM325 277h1v1h-1zM282 315h1v1h-1zM329 274h1v1h-1zM277 321h1v1h-1zM290 305h1v1h-1zM274 324h1v1h-1zM265 333h1v1h-1zM285 311h1v1h-1zM222 380h1v1h-1zM269 330h1v1h-1zM400 236h1v1h-1zM964 236h1v1h-1zM258 339h1v1h-1zM253 345h1v1h-1zM308 290h1v1h-1zM343 266h1v1h-1zM300 295h1v1h-1zM250 348h1v1h-1zM288 307h1v1h-1zM219 383h1v1h-1zM222 379h1v1h-1zM64 427h2v1h-2zM230 370h1v1h-1zM297 298h1v1h-1zM225 376h1v1h-1zM245 354h1v1h-1zM272 326h1v1h-1zM295 300h1v1h-1zM205 393h2v1h-2zM217 385h1v1h-1zM237 363h1v1h-1zM260 337h1v1h-1zM214 388h1v1h-1zM316 283h1v1h-1zM373 255h1v1h-1zM314 285h1v1h-1zM292 303h1v1h-1zM240 359h1v1h-1z" fill="#00FF00"/><path d="M415 184h1v1h-1zM441 184h1v1h-1zM625 184h2v1h-2zM680 184h8v1h-8zM723 184h3v1h-3zM791 184h1v1h-1zM411 187h1v1h-1zM445 187h1v1h-1zM620 187h1v1h-1zM698 187h6v1h-6zM717 187h2v1h-2zM793 187h1v1h-1zM408 191h1v1h-1zM450 191h2v1h-2zM464 191h6v1h-6zM613 191h2v1h-2zM795 191h1v1h-1zM301 235h2v1h-2zM880 235h6v1h-6zM898 235h14v1h-14zM60 410h1v1h-1zM754 167h2v1h-2zM781 167h1v1h-1zM739 178h2v1h-2zM788 178h1v1h-1zM298 238h1v1h-1zM922 238h12v1h-12zM315 228h3v1h-3zM561 228h1v1h-1zM565 228h1v1h-1zM855 228h2v1h-2zM289 251h1v1h-1zM967 251h1v1h-1zM106 395h20v1h-20zM150 395h4v1h-4zM352 221h8v1h-8zM378 221h2v1h-2zM522 221h2v1h-2zM528 221h6v1h-6zM570 221h1v1h-1zM824 221h3v1h-3zM44 420h2v1h-2zM411 188h1v1h-1zM446 188h2v1h-2zM618 188h2v1h-2zM704 188h13v1h-13zM793 188h1v1h-1zM74 400h2v1h-2zM80 400h8v1h-8zM138 400h3v1h-3zM278 269h1v1h-1zM979 269h1v1h-1zM408 192h1v1h-1zM452 192h12v1h-12zM470 192h2v1h-2zM608 192h5v1h-5zM795 192h1v1h-1zM418 182h2v1h-2zM438 182h2v1h-2zM630 182h4v1h-4zM666 182h6v1h-6zM728 182h3v1h-3zM790 182h1v1h-1zM64 407h1v1h-1zM744 175h1v1h-1zM786 175h1v1h-1zM170 390h6v1h-6zM189 390h1v1h-1zM53 416h1v1h-1zM338 222h14v1h-14zM360 222h5v1h-5zM377 222h1v1h-1zM524 222h4v1h-4zM534 222h4v1h-4zM569 222h1v1h-1zM827 222h3v1h-3zM296 241h1v1h-1zM942 241h4v1h-4zM405 196h1v1h-1zM485 196h1v1h-1zM599 196h1v1h-1zM797 196h1v1h-1zM76 399h4v1h-4zM88 399h6v1h-6zM134 399h4v1h-4zM141 399h2v1h-2zM334 223h4v1h-4zM365 223h2v1h-2zM376 223h1v1h-1zM538 223h6v1h-6zM568 223h1v1h-1zM830 223h4v1h-4zM840 223h6v1h-6zM326 225h4v1h-4zM369 225h2v1h-2zM373 225h1v1h-1zM557 225h1v1h-1zM567 225h1v1h-1zM848 225h3v1h-3zM404 197h1v1h-1zM486 197h1v1h-1zM597 197h2v1h-2zM798 197h1v1h-1zM94 398h4v1h-4zM131 398h3v1h-3zM143 398h2v1h-2zM68 404h1v1h-1zM166 391h4v1h-4zM176 391h13v1h-13zM280 265h1v1h-1zM976 265h1v1h-1zM300 236h1v1h-1zM912 236h6v1h-6zM230 341h1v1h-1zM242 315h1v1h-1zM285 258h1v1h-1zM971 258h1v1h-1zM400 199h2v1h-2zM488 199h1v1h-1zM592 199h3v1h-3zM799 199h1v1h-1zM412 186h1v1h-1zM444 186h1v1h-1zM621 186h2v1h-2zM694 186h4v1h-4zM719 186h2v1h-2zM792 186h1v1h-1zM280 266h1v1h-1zM977 266h1v1h-1zM383 217h1v1h-1zM516 217h1v1h-1zM572 217h1v1h-1zM817 217h1v1h-1zM233 333h1v1h-1zM294 243h1v1h-1zM957 243h2v1h-2zM158 393h4v1h-4zM306 232h2v1h-2zM866 232h4v1h-4zM424 180h13v1h-13zM640 180h22v1h-22zM734 180h2v1h-2zM789 180h1v1h-1zM190 389h1v1h-1zM406 194h1v1h-1zM475 194h5v1h-5zM602 194h2v1h-2zM796 194h1v1h-1zM98 397h4v1h-4zM128 397h3v1h-3zM145 397h2v1h-2zM226 348h1v1h-1zM381 219h1v1h-1zM519 219h1v1h-1zM571 219h1v1h-1zM820 219h2v1h-2zM382 218h1v1h-1zM517 218h2v1h-2zM571 218h1v1h-1zM818 218h2v1h-2zM304 233h2v1h-2zM870 233h4v1h-4zM890 233h4v1h-4zM238 322h1v1h-1zM261 287h1v1h-1zM416 183h2v1h-2zM440 183h1v1h-1zM627 183h3v1h-3zM672 183h8v1h-8zM726 183h2v1h-2zM791 183h1v1h-1zM214 364h1v1h-1zM330 224h4v1h-4zM367 224h2v1h-2zM374 224h2v1h-2zM544 224h13v1h-13zM568 224h1v1h-1zM834 224h6v1h-6zM846 224h2v1h-2zM413 185h2v1h-2zM442 185h2v1h-2zM623 185h2v1h-2zM688 185h6v1h-6zM721 185h2v1h-2zM792 185h1v1h-1zM380 220h1v1h-1zM520 220h2v1h-2zM570 220h1v1h-1zM822 220h2v1h-2zM295 242h1v1h-1zM946 242h11v1h-11zM385 215h1v1h-1zM512 215h2v1h-2zM574 215h1v1h-1zM814 215h2v1h-2zM221 354h1v1h-1zM224 350h1v1h-1zM72 401h2v1h-2zM384 216h1v1h-1zM514 216h2v1h-2zM573 216h1v1h-1zM816 216h1v1h-1zM205 373h1v1h-1zM272 274h2v1h-2zM983 274h1v1h-1zM322 226h4v1h-4zM371 226h2v1h-2zM558 226h2v1h-2zM566 226h1v1h-1zM851 226h2v1h-2zM420 181h4v1h-4zM437 181h1v1h-1zM634 181h6v1h-6zM662 181h4v1h-4zM731 181h3v1h-3zM790 181h1v1h-1zM766 162h2v1h-2zM774 162h2v1h-2zM237 325h1v1h-1zM102 396h4v1h-4zM126 396h2v1h-2zM147 396h3v1h-3zM282 263h1v1h-1zM975 263h1v1h-1zM402 198h2v1h-2zM487 198h1v1h-1zM595 198h2v1h-2zM799 198h1v1h-1zM389 211h1v1h-1zM506 211h2v1h-2zM577 211h1v1h-1zM810 211h1v1h-1zM193 385h1v1h-1zM281 264h1v1h-1zM976 264h1v1h-1zM253 296h1v1h-1zM393 206h1v1h-1zM497 206h2v1h-2zM582 206h1v1h-1zM804 206h1v1h-1zM405 195h1v1h-1zM480 195h5v1h-5zM600 195h2v1h-2zM797 195h1v1h-1zM760 164h3v1h-3zM777 164h1v1h-1zM303 234h1v1h-1zM874 234h6v1h-6zM886 234h4v1h-4zM894 234h4v1h-4zM285 257h1v1h-1zM971 257h1v1h-1zM312 229h3v1h-3zM562 229h2v1h-2zM565 229h1v1h-1zM857 229h2v1h-2zM233 332h1v1h-1zM261 286h1v1h-1zM318 227h4v1h-4zM560 227h1v1h-1zM566 227h1v1h-1zM853 227h2v1h-2zM232 335h1v1h-1zM299 237h1v1h-1zM918 237h4v1h-4zM256 292h1v1h-1zM51 417h2v1h-2zM736 179h3v1h-3zM789 179h1v1h-1zM395 203h1v1h-1zM492 203h1v1h-1zM586 203h1v1h-1zM802 203h1v1h-1zM237 324h1v1h-1zM271 275h1v1h-1zM983 275h1v1h-1zM69 403h2v1h-2zM55 414h1v1h-1zM298 239h1v1h-1zM934 239h4v1h-4zM46 419h2v1h-2zM399 200h1v1h-1zM489 200h1v1h-1zM590 200h2v1h-2zM800 200h1v1h-1zM288 253h1v1h-1zM968 253h1v1h-1zM407 193h1v1h-1zM472 193h3v1h-3zM604 193h4v1h-4zM796 193h1v1h-1zM243 312h1v1h-1zM267 279h1v1h-1zM986 279h1v1h-1zM220 356h1v1h-1zM154 394h4v1h-4zM386 214h1v1h-1zM511 214h1v1h-1zM575 214h1v1h-1zM813 214h1v1h-1zM387 213h1v1h-1zM509 213h2v1h-2zM576 213h1v1h-1zM812 213h1v1h-1zM197 381h1v1h-1zM264 282h1v1h-1zM988 282h1v1h-1zM236 327h1v1h-1zM391 208h1v1h-1zM501 208h2v1h-2zM580 208h1v1h-1zM806 208h1v1h-1zM212 366h1v1h-1zM394 204h1v1h-1zM493 204h2v1h-2zM584 204h2v1h-2zM803 204h1v1h-1zM292 246h1v1h-1zM962 246h2v1h-2zM215 362h1v1h-1zM390 210h1v1h-1zM504 210h2v1h-2zM578 210h1v1h-1zM808 210h2v1h-2zM162 392h4v1h-4zM392 207h1v1h-1zM499 207h2v1h-2zM581 207h1v1h-1zM805 207h1v1h-1zM279 267h1v1h-1zM978 267h1v1h-1zM297 240h1v1h-1zM938 240h4v1h-4zM62 408h2v1h-2zM410 189h1v1h-1zM448 189h1v1h-1zM616 189h2v1h-2zM794 189h1v1h-1zM742 176h2v1h-2zM787 176h1v1h-1zM200 378h1v1h-1zM223 352h1v1h-1zM278 268h1v1h-1zM979 268h1v1h-1zM66 405h2v1h-2zM390 209h1v1h-1zM503 209h1v1h-1zM579 209h1v1h-1zM807 209h1v1h-1zM746 173h2v1h-2zM785 173h1v1h-1zM251 298h1v1h-1zM763 163h3v1h-3zM776 163h1v1h-1zM274 273h2v1h-2zM982 273h1v1h-1zM267 278h1v1h-1zM985 278h1v1h-1zM310 230h2v1h-2zM564 230h1v1h-1zM859 230h3v1h-3zM247 305h1v1h-1zM192 387h1v1h-1zM758 165h2v1h-2zM778 165h2v1h-2zM291 247h1v1h-1zM964 247h1v1h-1zM756 166h2v1h-2zM780 166h1v1h-1zM749 171h1v1h-1zM783 171h1v1h-1zM207 371h1v1h-1zM240 319h1v1h-1zM294 244h1v1h-1zM959 244h1v1h-1zM397 201h2v1h-2zM490 201h1v1h-1zM588 201h2v1h-2zM801 201h1v1h-1zM231 337h1v1h-1zM293 245h1v1h-1zM960 245h2v1h-2zM291 248h1v1h-1zM965 248h1v1h-1zM56 413h2v1h-2zM48 418h3v1h-3zM308 231h2v1h-2zM862 231h4v1h-4zM195 383h1v1h-1zM396 202h1v1h-1zM491 202h1v1h-1zM587 202h1v1h-1zM801 202h1v1h-1zM255 294h1v1h-1zM288 252h1v1h-1zM967 252h1v1h-1zM409 190h1v1h-1zM449 190h1v1h-1zM615 190h1v1h-1zM794 190h1v1h-1zM276 272h1v1h-1zM981 272h1v1h-1zM250 300h1v1h-1zM235 329h1v1h-1zM263 284h1v1h-1zM246 307h1v1h-1zM394 205h1v1h-1zM495 205h2v1h-2zM583 205h1v1h-1zM803 205h1v1h-1zM258 290h1v1h-1zM211 367h1v1h-1zM748 172h1v1h-1zM784 172h1v1h-1zM202 376h1v1h-1zM230 340h1v1h-1zM242 314h1v1h-1zM290 250h1v1h-1zM966 250h1v1h-1zM771 160h2v1h-2zM752 169h1v1h-1zM782 169h1v1h-1zM61 409h1v1h-1zM277 270h1v1h-1zM980 270h1v1h-1zM277 271h1v1h-1zM981 271h1v1h-1zM199 379h1v1h-1zM266 280h1v1h-1zM987 280h1v1h-1zM219 357h1v1h-1zM269 276h2v1h-2zM984 276h1v1h-1zM222 353h1v1h-1zM217 360h1v1h-1zM229 343h1v1h-1zM241 317h1v1h-1zM214 363h1v1h-1zM246 306h1v1h-1zM753 168h1v1h-1zM781 168h1v1h-1zM286 256h1v1h-1zM970 256h1v1h-1zM65 406h1v1h-1zM206 372h1v1h-1zM265 281h1v1h-1zM987 281h1v1h-1zM249 302h1v1h-1zM229 342h1v1h-1zM194 384h1v1h-1zM241 316h1v1h-1zM290 249h1v1h-1zM965 249h1v1h-1zM209 369h1v1h-1zM286 255h1v1h-1zM969 255h1v1h-1zM745 174h1v1h-1zM785 174h1v1h-1zM245 309h1v1h-1zM225 349h1v1h-1zM260 288h1v1h-1zM750 170h2v1h-2zM783 170h1v1h-1zM59 411h1v1h-1zM236 326h1v1h-1zM768 161h3v1h-3zM773 161h1v1h-1zM284 259h1v1h-1zM972 259h1v1h-1zM228 345h1v1h-1zM233 334h1v1h-1zM213 365h1v1h-1zM245 308h1v1h-1zM248 304h1v1h-1zM257 291h1v1h-1zM204 374h1v1h-1zM71 402h1v1h-1zM252 297h1v1h-1zM244 311h1v1h-1zM201 377h1v1h-1zM221 355h1v1h-1zM224 351h1v1h-1zM388 212h1v1h-1zM508 212h1v1h-1zM576 212h1v1h-1zM811 212h1v1h-1zM192 386h1v1h-1zM268 277h1v1h-1zM985 277h1v1h-1zM741 177h1v1h-1zM787 177h1v1h-1zM216 361h1v1h-1zM228 344h1v1h-1zM240 318h1v1h-1zM248 303h1v1h-1zM227 347h1v1h-1zM239 321h1v1h-1zM208 370h1v1h-1zM287 254h1v1h-1zM969 254h1v1h-1zM232 336h1v1h-1zM244 310h1v1h-1zM54 415h1v1h-1zM256 293h1v1h-1zM235 328h1v1h-1zM196 382h1v1h-1zM283 261h1v1h-1zM973 261h1v1h-1zM243 313h1v1h-1zM191 388h1v1h-1zM264 283h1v1h-1zM227 346h1v1h-1zM239 320h1v1h-1zM282 262h1v1h-1zM974 262h1v1h-1zM58 412h1v1h-1zM231 339h1v1h-1zM203 375h1v1h-1zM251 299h1v1h-1zM283 260h1v1h-1zM973 260h1v1h-1zM218 359h1v1h-1zM234 331h1v1h-1zM259 289h1v1h-1zM262 285h1v1h-1zM254 295h1v1h-1zM210 368h1v1h-1zM231 338h1v1h-1zM198 380h1v1h-1zM218 358h1v1h-1zM234 330h1v1h-1zM250 301h1v1h-1zM238 323h1v1h-1z" fill="#FFFFFF"/><path d="M42 446h3v3h-3zM50 446h3v3h-3zM58 446h3v3h-3zM66 446h3v3h-3zM74 446h3v3h-3zM82 401h3v3h-3zM90 401h3v3h-3zM98 401h3v3h-3zM106 401h3v3h-3zM114 401h3v3h-3zM122 401h3v3h-3zM130 419h3v3h-3zM138 419h3v3h-3zM146 419h3v3h-3zM154 419h3v3h-3zM162 419h3v3h-3zM170 419h3v3h-3zM178 412h3v3h-3zM186 412h3v3h-3zM194 412h3v3h-3zM202 412h3v3h-3zM210 412h3v3h-3zM218 412h3v3h-3zM226 412h3v3h-3zM234 412h3v3h-3zM242 412h3v3h-3zM250 412h3v3h-3zM258 412h3v3h-3zM266 412h3v3h-3zM274 412h3v3h-3zM282 412h3v3h-3zM290 412h3v3h-3zM298 412h3v3h-3zM306 412h3v3h-3zM314 412h3v3h-3zM322 412h3v3h-3zM330 412h3v3h-3zM338 412h3v3h-3zM346 412h3v3h-3zM354 412h3v3h-3zM362 412h3v3h-3zM370 240h3v3h-3zM378 240h3v3h-3zM386 240h3v3h-3zM394 240h3v3h-3zM402 240h3v3h-3zM410 240h3v3h-3zM418 240h3v3h-3zM426 240h3v3h-3zM434 240h3v3h-3zM442 240h3v3h-3zM450 240h3v3h-3zM458 214h3v3h-3zM466 214h3v3h-3zM474 214h3v3h-3zM482 214h3v3h-3zM490 242h3v3h-3zM498 242h3v3h-3zM506 242h3v3h-3zM514 247h3v3h-3zM522 247h3v3h-3zM530 247h3v3h-3zM538 247h3v3h-3zM546 247h3v3h-3zM554 247h3v3h-3zM562 259h3v3h-3zM570 259h3v3h-3zM578 259h3v3h-3zM586 259h3v3h-3zM594 259h3v3h-3zM602 259h3v3h-3zM610 199h3v3h-3zM618 199h3v3h-3zM626 199h3v3h-3zM634 199h3v3h-3zM642 199h3v3h-3zM650 199h3v3h-3zM658 199h3v3h-3zM666 199h3v3h-3zM674 199h3v3h-3zM682 199h3v3h-3zM690 204h3v3h-3zM698 204h3v3h-3zM706 204h3v3h-3zM714 204h3v3h-3zM722 204h3v3h-3zM730 204h3v3h-3zM738 204h3v3h-3zM746 204h3v3h-3zM754 204h3v3h-3zM762 204h3v3h-3zM770 204h3v3h-3zM778 204h3v3h-3zM786 204h3v3h-3zM794 204h3v3h-3zM802 291h3v3h-3zM810 291h3v3h-3zM818 291h3v3h-3zM826 291h3v3h-3zM834 291h3v3h-3zM842 291h3v3h-3zM850 291h3v3h-3zM858 291h3v3h-3zM866 291h3v3h-3zM874 251h3v3h-3zM882 251h3v3h-3zM890 251h3v3h-3zM898 246h3v3h-3zM906 246h3v3h-3zM914 246h3v3h-3zM922 246h3v3h-3zM930 246h3v3h-3zM938 246h3v3h-3zM946 246h3v3h-3zM954 246h3v3h-3zM962 246h3v3h-3zM970 246h3v3h-3zM978 246h3v3h-3zM986 246h3v3h-3z" fill="#00FF00"/><path d="M42 393h3v3h-3zM50 393h3v3h-3zM58 351h3v3h-3zM66 351h3v3h-3zM74 351h3v3h-3zM82 351h3v3h-3zM90 351h3v3h-3zM98 351h3v3h-3zM106 351h3v3h-3zM114 351h3v3h-3zM122 351h3v3h-3zM130 351h3v3h-3zM138 351h3v3h-3zM146 364h3v3h-3zM154 364h3v3h-3zM162 364h3v3h-3zM170 364h3v3h-3zM178 364h3v3h-3zM186 364h3v3h-3zM194 364h3v3h-3zM202 364h3v3h-3zM210 364h3v3h-3zM218 364h3v3h-3zM226 364h3v3h-3zM234 364h3v3h-3zM242 364h3v3h-3zM250 213h3v3h-3zM258 213h3v3h-3zM266 213h3v3h-3zM274 213h3v3h-3zM282 213h3v3h-3zM290 176h3v3h-3zM298 176h3v3h-3zM306 176h3v3h-3zM314 176h3v3h-3zM322 176h3v3h-3zM330 176h3v3h-3zM338 176h3v3h-3zM346 176h3v3h-3zM354 202h3v3h-3zM362 202h3v3h-3zM370 202h3v3h-3zM378 202h3v3h-3zM386 202h3v3h-3zM394 202h3v3h-3zM402 202h3v3h-3zM410 202h3v3h-3zM418 124h3v3h-3zM426 124h3v3h-3zM434 124h3v3h-3zM442 124h3v3h-3zM450 124h3v3h-3zM458 124h3v3h-3zM466 176h3v3h-3zM474 176h3v3h-3zM482 176h3v3h-3zM490 176h3v3h-3zM498 176h3v3h-3zM506 176h3v3h-3zM514 176h3v3h-3zM522 176h3v3h-3zM530 209h3v3h-3zM538 209h3v3h-3zM546 209h3v3h-3zM554 209h3v3h-3zM562 209h3v3h-3zM570 209h3v3h-3zM578 139h3v3h-3zM586 139h3v3h-3zM594 139h3v3h-3zM602 139h3v3h-3zM610 139h3v3h-3zM618 139h3v3h-3zM626 147h3v3h-3zM634 147h3v3h-3zM642 147h3v3h-3zM650 147h3v3h-3zM658 147h3v3h-3zM666 164h3v3h-3zM674 164h3v3h-3zM682 164h3v3h-3zM690 164h3v3h-3zM698 164h3v3h-3zM706 164h3v3h-3zM714 164h3v3h-3zM722 164h3v3h-3zM730 164h3v3h-3zM738 164h3v3h-3zM746 164h3v3h-3zM754 103h3v3h-3zM762 103h3v3h-3zM770 103h3v3h-3zM778 103h3v3h-3zM786 103h3v3h-3zM794 103h3v3h-3zM802 103h3v3h-3zM810 103h3v3h-3zM818 103h3v3h-3zM826 207h3v3h-3zM834 207h3v3h-3zM842 207h3v3h-3zM850 207h3v3h-3zM858 207h3v3h-3zM866 207h3v3h-3zM874 207h3v3h-3zM882 207h3v3h-3zM890 222h3v3h-3zM898 222h3v3h-3zM906 222h3v3h-3zM914 222h3v3h-3zM922 222h3v3h-3zM930 222h3v3h-3zM938 222h3v3h-3zM946 217h3v3h-3zM954 217h3v3h-3zM962 217h3v3h-3zM970 217h3v3h-3zM978 217h3v3h-3zM986 217h3v3h-3z" fill="#FFFFFF"/><path d="M43 394h3v1h-3z M44 393h1v3h-1zM51 396h3v1h-3z M52 395h1v3h-1zM59 448h3v1h-3z M60 447h1v3h-1zM67 446h3v1h-3z M68 445h1v3h-1zM75 444h3v1h-3z M76 443h1v3h-1zM83 442h3v1h-3z M84 441h1v3h-1zM91 440h3v1h-3z M92 439h1v3h-1zM99 439h3v1h-3z M100 438h1v3h-1zM107 437h3v1h-3z M108 436h1v3h-1zM115 435h3v1h-3z M116 434h1v3h-1zM123 434h3v1h-3z M124 433h1v3h-1zM131 432h3v1h-3z M132 431h1v3h-1zM139 430h3v1h-3z M140 429h1v3h-1zM147 429h3v1h-3z M148 428h1v3h-1zM155 427h3v1h-3z M156 426h1v3h-1zM163 426h3v1h-3z M164 425h1v3h-1zM171 424h3v1h-3z M172 423h1v3h-1zM179 423h3v1h-3z M180 422h1v3h-1zM187 422h3v1h-3z M188 421h1v3h-1zM195 420h3v1h-3z M196 419h1v3h-1zM203 416h3v1h-3z M204 415h1v3h-1zM211 411h3v1h-3z M212 410h1v3h-1zM219 402h3v1h-3z M220 401h1v3h-1zM227 394h3v1h-3z M228 393h1v3h-1zM235 381h3v1h-3z M236 380h1v3h-1zM243 364h3v1h-3z M244 363h1v3h-1zM251 346h3v1h-3z M252 345h1v3h-1zM259 325h3v1h-3z M260 324h1v3h-1zM267 308h3v1h-3z M268 307h1v3h-1zM275 293h3v1h-3z M276 292h1v3h-1zM283 281h3v1h-3z M284 280h1v3h-1zM291 264h3v1h-3z M292 263h1v3h-1zM299 247h3v1h-3z M300 246h1v3h-1zM307 233h3v1h-3z M308 232h1v3h-1zM315 222h3v1h-3z M316 221h1v3h-1zM323 178h3v1h-3z M324 177h1v3h-1zM331 179h3v1h-3z M332 178h1v3h-1zM339 180h3v1h-3z M340 179h1v3h-1zM347 183h3v1h-3z M348 182h1v3h-1zM355 187h3v1h-3z M356 186h1v3h-1zM363 190h3v1h-3z M364 189h1v3h-1zM371 193h3v1h-3z M372 192h1v3h-1zM379 240h3v1h-3z M380 239h1v3h-1zM387 239h3v1h-3z M388 238h1v3h-1zM395 238h3v1h-3z M396 237h1v3h-1zM403 234h3v1h-3z M404 233h1v3h-1zM411 229h3v1h-3z M412 228h1v3h-1zM419 221h3v1h-3z M420 220h1v3h-1zM427 212h3v1h-3z M428 211h1v3h-1zM435 126h3v1h-3z M436 125h1v3h-1zM443 128h3v1h-3z M444 127h1v3h-1zM451 130h3v1h-3z M452 129h1v3h-1zM459 135h3v1h-3z M460 134h1v3h-1zM467 138h3v1h-3z M468 137h1v3h-1zM475 141h3v1h-3z M476 140h1v3h-1zM483 144h3v1h-3z M484 143h1v3h-1zM491 146h3v1h-3z M492 145h1v3h-1zM499 153h3v1h-3z M500 152h1v3h-1zM507 158h3v1h-3z M508 157h1v3h-1zM515 164h3v1h-3z M516 163h1v3h-1zM523 170h3v1h-3z M524 169h1v3h-1zM531 177h3v1h-3z M532 176h1v3h-1zM539 182h3v1h-3z M540 181h1v3h-1zM547 188h3v1h-3z M548 187h1v3h-1zM555 193h3v1h-3z M556 192h1v3h-1zM563 197h3v1h-3z M564 196h1v3h-1zM571 260h3v1h-3z M572 259h1v3h-1zM579 260h3v1h-3z M580 259h1v3h-1zM587 256h3v1h-3z M588 255h1v3h-1zM595 252h3v1h-3z M596 251h1v3h-1zM603 247h3v1h-3z M604 246h1v3h-1zM611 243h3v1h-3z M612 242h1v3h-1zM619 239h3v1h-3z M620 238h1v3h-1zM627 235h3v1h-3z M628 234h1v3h-1zM635 231h3v1h-3z M636 230h1v3h-1zM643 228h3v1h-3z M644 227h1v3h-1zM651 224h3v1h-3z M652 223h1v3h-1zM659 221h3v1h-3z M660 220h1v3h-1zM667 218h3v1h-3z M668 217h1v3h-1zM675 215h3v1h-3z M676 214h1v3h-1zM683 212h3v1h-3z M684 211h1v3h-1zM691 209h3v1h-3z M692 208h1v3h-1zM699 206h3v1h-3z M700 205h1v3h-1zM707 204h3v1h-3z M708 203h1v3h-1zM715 203h3v1h-3z M716 202h1v3h-1zM723 200h3v1h-3z M724 199h1v3h-1zM731 198h3v1h-3z M732 197h1v3h-1zM739 196h3v1h-3z M740 195h1v3h-1zM747 194h3v1h-3z M748 193h1v3h-1zM755 192h3v1h-3z M756 191h1v3h-1zM763 186h3v1h-3z M764 185h1v3h-1zM771 181h3v1h-3z M772 180h1v3h-1zM779 105h3v1h-3z M780 104h1v3h-1zM787 107h3v1h-3z M788 106h1v3h-1zM795 113h3v1h-3z M796 112h1v3h-1zM803 122h3v1h-3z M804 121h1v3h-1zM811 136h3v1h-3z M812 135h1v3h-1zM819 149h3v1h-3z M820 148h1v3h-1zM827 160h3v1h-3z M828 159h1v3h-1zM835 171h3v1h-3z M836 170h1v3h-1zM843 181h3v1h-3z M844 180h1v3h-1zM851 190h3v1h-3z M852 189h1v3h-1zM859 198h3v1h-3z M860 197h1v3h-1zM867 205h3v1h-3z M868 204h1v3h-1zM875 212h3v1h-3z M876 211h1v3h-1zM883 219h3v1h-3z M884 218h1v3h-1zM891 293h3v1h-3z M892 292h1v3h-1zM899 291h3v1h-3z M900 290h1v3h-1zM907 290h3v1h-3z M908 289h1v3h-1zM915 289h3v1h-3z M916 288h1v3h-1zM923 288h3v1h-3z M924 287h1v3h-1zM931 286h3v1h-3z M932 285h1v3h-1zM939 285h3v1h-3z M940 284h1v3h-1zM947 284h3v1h-3z M948 283h1v3h-1zM955 281h3v1h-3z M956 280h1v3h-1zM963 219h3v1h-3z M964 218h1v3h-1zM971 221h3v1h-3z M972 220h1v3h-1zM979 224h3v1h-3z M980 223h1v3h-1zM987 230h3v1h-3z M988 229h1v3h-1z" fill="#00FF00"/><path d="M44 394h1v1h-1zM52 396h1v1h-1zM60 448h1v1h-1zM68 446h1v1h-1zM76 444h1v1h-1zM84 442h1v1h-1zM92 440h1v1h-1zM100 439h1v1h-1zM108 437h1v1h-1zM116 435h1v1h-1zM124 434h1v1h-1zM132 432h1v1h-1zM140 430h1v1h-1zM148 429h1v1h-1zM156 427h1v1h-1zM164 426h1v1h-1zM172 424h1v1h-1zM180 423h1v1h-1zM188 422h1v1h-1zM196 420h1v1h-1zM204 416h1v1h-1zM212 411h1v1h-1zM220 402h1v1h-1zM228 394h1v1h-1zM236 381h1v1h-1zM244 364h1v1h-1zM252 346h1v1h-1zM260 325h1v1h-1zM268 308h1v1h-1zM276 293h1v1h-1zM284 281h1v1h-1zM292 264h1v1h-1zM300 247h1v1h-1zM308 233h1v1h-1zM316 222h1v1h-1zM324 178h1v1h-1zM332 179h1v1h-1zM340 180h1v1h-1zM348 183h1v1h-1zM356 187h1v1h-1zM364 190h1v1h-1zM372 193h1v1h-1zM380 240h1v1h-1zM388 239h1v1h-1zM396 238h1v1h-1zM404 234h1v1h-1zM412 229h1v1h-1zM420 221h1v1h-1zM428 212h1v1h-1zM436 126h1v1h-1zM444 128h1v1h-1zM452 130h1v1h-1zM460 135h1v1h-1zM468 138h1v1h-1zM476 141h1v1h-1zM484 144h1v1h-1zM492 146h1v1h-1zM500 153h1v1h-1zM508 158h1v1h-1zM516 164h1v1h-1zM524 170h1v1h-1zM532 177h1v1h-1zM540 182h1v1h-1zM548 188h1v1h-1zM556 193h1v1h-1zM564 197h1v1h-1zM572 260h1v1h-1zM580 260h1v1h-1zM588 256h1v1h-1zM596 252h1v1h-1zM604 247h1v1h-1zM612 243h1v1h-1zM620 239h1v1h-1zM628 235h1v1h-1zM636 231h1v1h-1zM644 228h1v1h-1zM652 224h1v1h-1zM660 221h1v1h-1zM668 218h1v1h-1zM676 215h1v1h-1zM684 212h1v1h-1zM692 209h1v1h-1zM700 206h1v1h-1zM708 204h1v1h-1zM716 203h1v1h-1zM724 200h1v1h-1zM732 198h1v1h-1zM740 196h1v1h-1zM748 194h1v1h-1zM756 192h1v1h-1zM764 186h1v1h-1zM772 181h1v1h-1zM780 105h1v1h-1zM788 107h1v1h-1zM796 113h1v1h-1zM804 122h1v1h-1zM812 136h1v1h-1zM820 149h1v1h-1zM828 160h1v1h-1zM836 171h1v1h-1zM844 181h1v1h-1zM852 190h1v1h-1zM860 198h1v1h-1zM868 205h1v1h-1zM876 212h1v1h-1zM884 219h1v1h-1zM892 293h1v1h-1zM900 291h1v1h-1zM908 290h1v1h-1zM916 289h1v1h-1zM924 288h1v1h-1zM932 286h1v1h-1zM940 285h1v1h-1zM948 284h1v1h-1zM956 281h1v1h-1zM964 219h1v1h-1zM972 221h1v1h-1zM980 224h1v1h-1zM988 230h1v1h-1z" fill="#D0FFD0"/></g><g clip-path="url(#ca)"><path d="M58 526h5V548h-5zM66 523h5V548h-5zM74 521h5V548h-5zM82 520h5V548h-5zM154 542h5V548h-5zM162 542h5V548h-5zM170 540h5V548h-5zM178 539h5V548h-5zM194 538h5V548h-5zM202 535h5V548h-5zM210 529h5V548h-5zM218 520h5V548h-5zM226 509h5V548h-5zM234 499h5V548h-5zM242 491h5V548h-5zM250 483h5V548h-5zM258 479h5V548h-5zM266 475h5V548h-5zM274 475h5V548h-5zM282 474h5V548h-5zM290 473h5V548h-5zM298 470h5V548h-5zM306 469h5V548h-5zM386 505h5V548h-5zM394 504h5V548h-5zM402 502h5V548h-5zM410 497h5V548h-5zM418 494h5V548h-5zM530 548h5V564h-5zM546 548h5V564h-5zM554 548h5V562h-5zM570 548h5V559h-5zM578 548h5V552h-5zM586 545h5V548h-5zM594 539h5V548h-5zM602 532h5V548h-5zM610 530h5V548h-5zM626 533h5V548h-5zM714 543h5V548h-5zM722 542h5V548h-5zM730 539h5V548h-5zM738 536h5V548h-5zM746 532h5V548h-5zM754 527h5V548h-5zM762 525h5V548h-5zM770 524h5V548h-5zM834 548h5V586h-5zM842 548h5V580h-5zM850 548h5V575h-5zM858 548h5V573h-5zM890 548h5V574h-5zM898 548h5V572h-5zM906 548h5V570h-5zM914 548h5V568h-5zM922 548h5V567h-5zM946 548h5V568h-5zM954 548h5V567h-5z" fill="#008000"/><path d="M42 526h5V548h-5zM50 527h5V548h-5zM90 521h5V548h-5zM98 525h5V548h-5zM106 530h5V548h-5zM114 534h5V548h-5zM122 536h5V548h-5zM130 540h5V548h-5zM138 542h5V548h-5zM146 542h5V548h-5zM186 540h5V548h-5zM314 471h5V548h-5zM322 474h5V548h-5zM330 480h5V548h-5zM338 486h5V548h-5zM346 491h5V548h-5zM354 495h5V548h-5zM362 499h5V548h-5zM370 503h5V548h-5zM378 505h5V548h-5zM426 494h5V548h-5zM434 500h5V548h-5zM442 507h5V548h-5zM450 517h5V548h-5zM458 528h5V548h-5zM466 534h5V548h-5zM474 538h5V548h-5zM482 541h5V548h-5zM490 546h5V548h-5zM498 548h5V550h-5zM506 548h5V556h-5zM514 548h5V562h-5zM522 548h5V565h-5zM538 548h5V564h-5zM562 548h5V562h-5zM618 534h5V548h-5zM634 533h5V548h-5zM642 534h5V548h-5zM650 535h5V548h-5zM658 535h5V548h-5zM666 537h5V548h-5zM674 539h5V548h-5zM682 540h5V548h-5zM690 541h5V548h-5zM698 542h5V548h-5zM706 544h5V548h-5zM778 526h5V548h-5zM786 534h5V548h-5zM794 548h5V549h-5zM802 548h5V564h-5zM810 548h5V578h-5zM818 548h5V587h-5zM826 548h5V589h-5zM866 548h5V573h-5zM874 548h5V574h-5zM882 548h5V575h-5zM930 548h5V568h-5zM938 548h5V568h-5zM962 548h5V568h-5zM970 548h5V571h-5zM978 548h5V577h-5zM986 548h5V585h-5z" fill="#FF0000"/></g><path d="M990 82H999L994.5 87Z" fill="#7A8A9A"/><path d="M44 589V594H49Z" fill="#8899AA"/><path d="M1235 107h2v1h-2zM1235 142h2v1h-2zM1235 177h2v1h-2zM1235 211h2v1h-2zM1235 246h2v1h-2zM1235 281h2v1h-2zM1235 316h2v1h-2zM1235 351h2v1h-2zM1235 385h2v1h-2zM1235 420h2v1h-2zM1235 455h2v1h-2zM1235 464h1v1h-1zM1235 548h1v1h-1zM44 595h1v3h-1zM108 595h1v3h-1zM172 595h1v3h-1zM236 595h1v3h-1zM300 595h1v3h-1zM364 595h1v3h-1zM428 595h1v3h-1zM492 595h1v3h-1zM556 595h1v3h-1zM620 595h1v3h-1zM684 595h1v3h-1zM748 595h1v3h-1zM812 595h1v3h-1zM876 595h1v3h-1zM940 595h1v3h-1z" fill="#fff"/><text x="1240" y="111" font-family="Liberation Sans, sans-serif" font-size="10" fill="#fff" letter-spacing="-0.6">1.3025</text><text x="1240" y="146" font-family="Liberation Sans, sans-serif" font-size="10" fill="#fff" letter-spacing="-0.6">1.2990</text><text x="1240" y="181" font-family="Liberation Sans, sans-serif" font-size="10" fill="#fff" letter-spacing="-0.6">1.2955</text><text x="1240" y="215" font-family="Liberation Sans, sans-serif" font-size="10" fill="#fff" letter-spacing="-0.6">1.2920</text><text x="1240" y="250" font-family="Liberation Sans, sans-serif" font-size="10" fill="#fff" letter-spacing="-0.6">1.2885</text><text x="1240" y="285" font-family="Liberation Sans, sans-serif" font-size="10" fill="#fff" letter-spacing="-0.6">1.2850</text><text x="1240" y="320" font-family="Liberation Sans, sans-serif" font-size="10" fill="#fff" letter-spacing="-0.6">1.2815</text><text x="1240" y="355" font-family="Liberation Sans, sans-serif" font-size="10" fill="#fff" letter-spacing="-0.6">1.2780</text><text x="1240" y="389" font-family="Liberation Sans, sans-serif" font-size="10" fill="#fff" letter-spacing="-0.6">1.2745</text><text x="1240" y="424" font-family="Liberation Sans, sans-serif" font-size="10" fill="#fff" letter-spacing="-0.6">1.2710</text><text x="1240" y="459" font-family="Liberation Sans, sans-serif" font-size="10" fill="#fff" letter-spacing="-0.6">1.2675</text><text x="1238" y="473" font-family="Liberation Sans, sans-serif" font-size="10" fill="#fff" letter-spacing="-0.6">0.0139</text><text x="1238" y="551" font-family="Liberation Sans, sans-serif" font-size="10" fill="#fff" letter-spacing="-0.6">0.00</text><text x="1238" y="592" font-family="Liberation Sans, sans-serif" font-size="10" fill="#fff" letter-spacing="-0.6">-0.00751</text><text x="44" y="607" font-family="Liberation Sans, sans-serif" font-size="10" fill="#fff" letter-spacing="-0.45">14 Jul 2010</text><text x="108" y="607" font-family="Liberation Sans, sans-serif" font-size="10" fill="#fff" letter-spacing="-0.45">15 Jul 00:00</text><text x="172" y="607" font-family="Liberation Sans, sans-serif" font-size="10" fill="#fff" letter-spacing="-0.45">15 Jul 08:00</text><text x="236" y="607" font-family="Liberation Sans, sans-serif" font-size="10" fill="#fff" letter-spacing="-0.45">15 Jul 16:00</text><text x="300" y="607" font-family="Liberation Sans, sans-serif" font-size="10" fill="#fff" letter-spacing="-0.45">16 Jul 00:00</text><text x="364" y="607" font-family="Liberation Sans, sans-serif" font-size="10" fill="#fff" letter-spacing="-0.45">16 Jul 08:00</text><text x="428" y="607" font-family="Liberation Sans, sans-serif" font-size="10" fill="#fff" letter-spacing="-0.45">16 Jul 16:00</text><text x="492" y="607" font-family="Liberation Sans, sans-serif" font-size="10" fill="#fff" letter-spacing="-0.45">19 Jul 00:00</text><text x="556" y="607" font-family="Liberation Sans, sans-serif" font-size="10" fill="#fff" letter-spacing="-0.45">19 Jul 08:00</text><text x="620" y="607" font-family="Liberation Sans, sans-serif" font-size="10" fill="#fff" letter-spacing="-0.45">19 Jul 16:00</text><text x="684" y="607" font-family="Liberation Sans, sans-serif" font-size="10" fill="#fff" letter-spacing="-0.45">20 Jul 00:00</text><text x="748" y="607" font-family="Liberation Sans, sans-serif" font-size="10" fill="#fff" letter-spacing="-0.45">20 Jul 08:00</text><text x="812" y="607" font-family="Liberation Sans, sans-serif" font-size="10" fill="#fff" letter-spacing="-0.45">20 Jul 16:00</text><text x="876" y="607" font-family="Liberation Sans, sans-serif" font-size="10" fill="#fff" letter-spacing="-0.45">21 Jul 00:00</text><text x="940" y="607" font-family="Liberation Sans, sans-serif" font-size="10" fill="#fff" letter-spacing="-0.45">21 Jul 08:00</text><text x="48" y="93" font-family="Liberation Sans, sans-serif" font-size="10" fill="#fff" letter-spacing="-0.45">EURUSD,H1</text><text x="109" y="93" font-family="Liberation Sans, sans-serif" font-size="10" fill="#fff" letter-spacing="-0.45">1.2797 1.2807 1.2791 1.2806</text><text x="48" y="103" font-family="Liberation Sans, sans-serif" font-size="10" fill="#fff" letter-spacing="-0.37">38 minutes 28 seconds left to bar end</text><text x="49" y="280" font-family="Liberation Sans, sans-serif" font-size="10" fill="#fff" letter-spacing="-0.36">#311417016 sell</text><text x="48" y="476" font-family="Liberation Sans, sans-serif" font-size="10" fill="#fff" letter-spacing="-0.45">AO -0.00600</text><text x="999" y="330" font-family="Liberation Sans, sans-serif" font-size="10" fill="#fff">&lt;38:28</text><rect x="1237" y="319" width="35" height="11" fill="#fff"/><text x="1240" y="328" font-family="Liberation Sans, sans-serif" font-size="10" letter-spacing="-0.6" fill="#000">1.2806</text></svg>
<!-- tabs -->
<div class="a" style="left:39px;top:615px;width:1237px;height:19px;background:#ECE9D8"></div><div class="a" style="left:40px;top:615px;width:1px;height:18px;background:#888"></div><div class="a" style="left:4px;top:634px;width:1272px;height:1px;background:#fff"></div><div class="a" style="left:199px;top:613px;width:80px;height:19px;background:#fff;border:1px solid #000;border-top:none;box-shadow:1px 1px 0 #888"></div><div class="a" style="left:53px;top:617px;color:#808080;font-size:11px;letter-spacing:-0.5px">EURJPY,H1</div><div class="a" style="left:131px;top:617px;color:#808080;font-size:11px;letter-spacing:-0.5px">GBPUSD,H1</div><div class="a" style="left:209px;top:617px;color:#000;font-size:11px;letter-spacing:-0.5px">EURUSD,H1</div><div class="a" style="left:290px;top:617px;color:#808080;font-size:11px;letter-spacing:-0.5px">GBPJPY,H1</div><div class="a" style="left:119px;top:618px;width:1px;height:12px;background:#808080"></div><div class="a" style="left:354px;top:618px;width:1px;height:12px;background:#808080"></div><svg class="a" style="left:1246px;top:620px" width="24" height="8"><path d="M4 0v8L0 4z M19 0v8l4-4z" fill="#A0A0A0"/></svg>
<!-- terminal -->
<svg class="a" style="left:8px;top:641px" width="7" height="7"><path d="M0.5 0.5L6.5 6.5M6.5 0.5L0.5 6.5" stroke="#000" stroke-width="1.5"/></svg><div class="a" style="left:5px;top:652px;width:13px;height:90px;background:linear-gradient(90deg,#88AAE8,#A9C2F0)"></div><div class="a" style="left:4px;top:741px;width:9px;height:1px"></div><div class="a" style="left:6px;top:738px;transform:rotate(-90deg);transform-origin:0 0;color:#fff;font-size:11px;white-space:nowrap;width:90px">Terminal</div><div class="a" style="left:19px;top:638px;width:1253px;height:84px;background:#fff;border-left:1px solid #A7A492;border-top:1px solid #A7A492"></div><div class="a" style="left:20px;top:639px;width:1252px;height:20px;background:#ECE9D8;border-bottom:2px solid #D8D2BD"></div><div class="a" style="left:20px;top:659px;width:1252px;height:20px;background:#316AC5"></div><div class="a" style="left:20px;top:679px;width:1252px;height:20px;background:#C8C8C8"></div><div class="a" style="left:141px;top:643px;width:1px;height:14px;background:#C5C2B2;border-right:1px solid #fff;width:2px"></div><div class="a" style="left:141px;top:659px;width:1px;height:20px;background:#ECE9D8;opacity:.6"></div><div class="a" style="left:351px;top:643px;width:1px;height:14px;background:#C5C2B2;border-right:1px solid #fff;width:2px"></div><div class="a" style="left:351px;top:659px;width:1px;height:20px;background:#ECE9D8;opacity:.6"></div><div class="a" style="left:437px;top:643px;width:1px;height:14px;background:#C5C2B2;border-right:1px solid #fff;width:2px"></div><div class="a" style="left:437px;top:659px;width:1px;height:20px;background:#ECE9D8;opacity:.6"></div><div class="a" style="left:503px;top:643px;width:1px;height:14px;background:#C5C2B2;border-right:1px solid #fff;width:2px"></div><div class="a" style="left:503px;top:659px;width:1px;height:20px;background:#ECE9D8;opacity:.6"></div><div class="a" style="left:589px;top:643px;width:1px;height:14px;background:#C5C2B2;border-right:1px solid #fff;width:2px"></div><div class="a" style="left:589px;top:659px;width:1px;height:20px;background:#ECE9D8;opacity:.6"></div><div class="a" style="left:685px;top:643px;width:1px;height:14px;background:#C5C2B2;border-right:1px solid #fff;width:2px"></div><div class="a" style="left:685px;top:659px;width:1px;height:20px;background:#ECE9D8;opacity:.6"></div><div class="a" style="left:780px;top:643px;width:1px;height:14px;background:#C5C2B2;border-right:1px solid #fff;width:2px"></div><div class="a" style="left:780px;top:659px;width:1px;height:20px;background:#ECE9D8;opacity:.6"></div><div class="a" style="left:874px;top:643px;width:1px;height:14px;background:#C5C2B2;border-right:1px solid #fff;width:2px"></div><div class="a" style="left:874px;top:659px;width:1px;height:20px;background:#ECE9D8;opacity:.6"></div><div class="a" style="left:969px;top:643px;width:1px;height:14px;background:#C5C2B2;border-right:1px solid #fff;width:2px"></div><div class="a" style="left:969px;top:659px;width:1px;height:20px;background:#ECE9D8;opacity:.6"></div><div class="a" style="left:1064px;top:643px;width:1px;height:14px;background:#C5C2B2;border-right:1px solid #fff;width:2px"></div><div class="a" style="left:1064px;top:659px;width:1px;height:20px;background:#ECE9D8;opacity:.6"></div><div class="a" style="left:1159px;top:643px;width:1px;height:14px;background:#C5C2B2;border-right:1px solid #fff;width:2px"></div><div class="a" style="left:1159px;top:659px;width:1px;height:20px;background:#ECE9D8;opacity:.6"></div><div class="a" style="left:1269px;top:643px;width:1px;height:14px;background:#C5C2B2;border-right:1px solid #fff;width:2px"></div><div class="a" style="left:32px;top:643px">Order</div><svg class="a" style="left:72px;top:645px" width="9" height="8"><path d="M4.5 0.5L8.5 7.5H0.5z" fill="none" stroke="#C0BDAA"/></svg><div class="a" style="left:197px;width:150px;text-align:right;top:643px">Time</div><div class="a" style="left:283px;width:150px;text-align:right;top:643px">Type</div><div class="a" style="left:349px;width:150px;text-align:right;top:643px">Size</div><div class="a" style="left:437px;width:150px;text-align:right;top:643px">Symbol</div><div class="a" style="left:530px;width:150px;text-align:right;top:643px">Price</div><div class="a" style="left:625px;width:150px;text-align:right;top:643px">S / L</div><div class="a" style="left:720px;width:150px;text-align:right;top:643px">T / P</div><div class="a" style="left:815px;width:150px;text-align:right;top:643px">Price</div><div class="a" style="left:911px;width:150px;text-align:right;top:643px">Commission</div><div class="a" style="left:1006px;width:150px;text-align:right;top:643px">Swap</div><div class="a" style="left:1116px;width:150px;text-align:right;top:643px">Profit</div><div class="a" style="left:44px;top:663px;color:#fff">311417016</div><div class="a" style="left:197px;width:150px;text-align:right;top:663px;color:#fff">2010.07.20 15:19</div><div class="a" style="left:283px;width:150px;text-align:right;top:663px;color:#fff">sell</div><div class="a" style="left:349px;width:150px;text-align:right;top:663px;color:#fff">0.01</div><div class="a" style="left:437px;width:150px;text-align:right;top:663px;color:#fff">eurusd</div><div class="a" style="left:531px;width:150px;text-align:right;top:663px;color:#fff">1.2849</div><div class="a" style="left:627px;width:150px;text-align:right;top:663px;color:#fff">1.2838</div><div class="a" style="left:721px;width:150px;text-align:right;top:663px;color:#fff">0.0000</div><div class="a" style="left:816px;width:150px;text-align:right;top:663px;color:#fff">1.2809</div><div class="a" style="left:911px;width:150px;text-align:right;top:663px;color:#fff">0.00</div><div class="a" style="left:1006px;width:150px;text-align:right;top:663px;color:#fff">0.00</div><div class="a" style="left:1117px;width:150px;text-align:right;top:663px;color:#fff">0.40</div><svg class="a" style="left:23px;top:662px" width="15" height="15"><path d="M1.5 0.5h6l3 3v10h-9z" fill="#fff" stroke="#777"/><circle cx="10.5" cy="10.5" r="3.5" fill="#E05010" stroke="#A03000" stroke-width=".8"/></svg><svg class="a" style="left:23px;top:682px" width="12" height="14"><rect x="0.5" y="0.5" width="10" height="12" fill="#fff" stroke="#888"/><path d="M5.5 2.5l3.5 3.5H7v4H4V6H2z" fill="#18A018"/></svg><div class="a" style="left:45px;top:683px;font-weight:bold;white-space:nowrap;letter-spacing:0.41px">Balance: 101.84&nbsp; Equity: 102.24&nbsp; Margin: 0.32&nbsp; Free margin: 101.92&nbsp; Margin level: 31828.16%</div><div class="a" style="left:1117px;width:150px;text-align:right;top:683px;font-weight:bold">0.40</div><div class="a" style="left:19px;top:721px;width:1253px;height:20px;background:#ECE9D8;border-top:1px solid #000"></div><div class="a" style="left:22px;top:721px;width:48px;height:18px;background:#fff;border:1px solid #000;border-top:none;box-shadow:1px 1px 0 #888"></div><div class="a" style="left:32px;top:724px">Trade</div><div class="a" style="left:80px;top:724px;color:#808080">Account History</div><div class="a" style="left:176px;top:724px;color:#808080">News</div><div class="a" style="left:222px;top:724px;color:#808080">Alerts</div><div class="a" style="left:270px;top:724px;color:#808080">Mailbox</div><div class="a" style="left:325px;top:724px;color:#808080">Experts</div><div class="a" style="left:383px;top:724px;color:#808080">Journal</div><div class="a" style="left:166px;top:725px;width:1px;height:12px;background:#808080"></div><div class="a" style="left:212px;top:725px;width:1px;height:12px;background:#808080"></div><div class="a" style="left:260px;top:725px;width:1px;height:12px;background:#808080"></div><div class="a" style="left:316px;top:725px;width:1px;height:12px;background:#808080"></div><div class="a" style="left:373px;top:725px;width:1px;height:12px;background:#808080"></div><div class="a" style="left:428px;top:725px;width:1px;height:12px;background:#808080"></div>
<!-- status -->
<div class="a" style="left:4px;top:741px;width:1272px;height:1px;background:#fff"></div><div class="a" style="left:4px;top:744px;width:1272px;height:1px;background:#A7A492"></div><div class="a" style="left:4px;top:745px;width:1272px;height:1px;background:#fff"></div><div class="a" style="left:555px;top:747px;width:2px;height:17px;border-left:1px solid #C5C2B2;border-right:1px solid #fff"></div><div class="a" style="left:664px;top:747px;width:2px;height:17px;border-left:1px solid #C5C2B2;border-right:1px solid #fff"></div><div class="a" style="left:765px;top:747px;width:2px;height:17px;border-left:1px solid #C5C2B2;border-right:1px solid #fff"></div><div class="a" style="left:837px;top:747px;width:2px;height:17px;border-left:1px solid #C5C2B2;border-right:1px solid #fff"></div><div class="a" style="left:908px;top:747px;width:2px;height:17px;border-left:1px solid #C5C2B2;border-right:1px solid #fff"></div><div class="a" style="left:978px;top:747px;width:2px;height:17px;border-left:1px solid #C5C2B2;border-right:1px solid #fff"></div><div class="a" style="left:1049px;top:747px;width:2px;height:17px;border-left:1px solid #C5C2B2;border-right:1px solid #fff"></div><div class="a" style="left:1115px;top:747px;width:2px;height:17px;border-left:1px solid #C5C2B2;border-right:1px solid #fff"></div><div class="a" style="left:6px;top:751px;white-space:nowrap;letter-spacing:-0.28px">For Help, press F1</div><div class="a" style="left:560px;top:751px;white-space:nowrap;letter-spacing:0.1px">Default</div><div class="a" style="left:669px;top:751px;white-space:nowrap;letter-spacing:0.1px">2010.07.20 04:00</div><div class="a" style="left:770px;top:751px;white-space:nowrap;letter-spacing:0.1px">O: 1.2939</div><div class="a" style="left:842px;top:751px;white-space:nowrap;letter-spacing:0.1px">H: 1.2960</div><div class="a" style="left:912px;top:751px;white-space:nowrap;letter-spacing:0.1px">L: 1.2938</div><div class="a" style="left:982px;top:751px;white-space:nowrap;letter-spacing:0.1px">C: 1.2944</div><div class="a" style="left:1053px;top:751px;white-space:nowrap;letter-spacing:0.1px">V: 366</div><div class="a" style="left:1162px;top:751px;white-space:nowrap;letter-spacing:0.1px">17926/33 kb</div><svg class="a" style="left:1120px;top:751px" width="24" height="12" shape-rendering="crispEdges"><rect x="0" y="0" width="2" height="8" fill="#3F6A00"/><rect x="0" y="9" width="2" height="3" fill="#002850"/><rect x="3" y="0" width="2" height="7" fill="#3F6A00"/><rect x="3" y="8" width="2" height="4" fill="#002850"/><rect x="6" y="0" width="2" height="6" fill="#3F6A00"/><rect x="6" y="7" width="2" height="5" fill="#002850"/><rect x="9" y="0" width="2" height="5" fill="#3F6A00"/><rect x="9" y="6" width="2" height="6" fill="#002850"/><rect x="12" y="0" width="2" height="4" fill="#3F6A00"/><rect x="12" y="5" width="2" height="7" fill="#002850"/><rect x="15" y="0" width="2" height="3" fill="#3F6A00"/><rect x="15" y="4" width="2" height="8" fill="#002850"/><rect x="18" y="0" width="2" height="2" fill="#3F6A00"/><rect x="18" y="3" width="2" height="9" fill="#002850"/><rect x="21" y="0" width="2" height="1" fill="#3F6A00"/><rect x="21" y="2" width="2" height="10" fill="#002850"/></svg><svg class="a" style="left:1260px;top:750px" width="16" height="16" shape-rendering="crispEdges"><path d="M15 0h1v1h-1zM14 1h1v1h-1zM13 2h1v1h-1zM12 3h1v1h-1zM11 4h1v1h-1zM15 4h1v1h-1zM10 5h1v1h-1zM14 5h1v1h-1zM9 6h1v1h-1zM13 6h1v1h-1zM8 7h1v1h-1zM12 7h1v1h-1zM7 8h1v1h-1zM11 8h1v1h-1zM15 8h1v1h-1zM6 9h1v1h-1zM10 9h1v1h-1zM14 9h1v1h-1zM5 10h1v1h-1zM9 10h1v1h-1zM13 10h1v1h-1zM4 11h1v1h-1zM8 11h1v1h-1zM12 11h1v1h-1zM3 12h1v1h-1zM7 12h1v1h-1zM11 12h1v1h-1zM15 12h1v1h-1zM2 13h1v1h-1zM6 13h1v1h-1zM10 13h1v1h-1zM14 13h1v1h-1zM1 14h1v1h-1zM5 14h1v1h-1zM9 14h1v1h-1zM13 14h1v1h-1zM0 15h1v1h-1zM4 15h1v1h-1zM8 15h1v1h-1zM12 15h1v1h-1z" fill="#fff"/><path d="M15 1h1v1h-1zM14 2h1v1h-1zM15 2h1v1h-1zM13 3h1v1h-1zM14 3h1v1h-1zM12 4h1v1h-1zM13 4h1v1h-1zM11 5h1v1h-1zM12 5h1v1h-1zM15 5h1v1h-1zM10 6h1v1h-1zM11 6h1v1h-1zM14 6h1v1h-1zM15 6h1v1h-1zM9 7h1v1h-1zM10 7h1v1h-1zM13 7h1v1h-1zM14 7h1v1h-1zM8 8h1v1h-1zM9 8h1v1h-1zM12 8h1v1h-1zM13 8h1v1h-1zM7 9h1v1h-1zM8 9h1v1h-1zM11 9h1v1h-1zM12 9h1v1h-1zM15 9h1v1h-1zM6 10h1v1h-1zM7 10h1v1h-1zM10 10h1v1h-1zM11 10h1v1h-1zM14 10h1v1h-1zM15 10h1v1h-1zM5 11h1v1h-1zM6 11h1v1h-1zM9 11h1v1h-1zM10 11h1v1h-1zM13 11h1v1h-1zM14 11h1v1h-1zM4 12h1v1h-1zM5 12h1v1h-1zM8 12h1v1h-1zM9 12h1v1h-1zM12 12h1v1h-1zM13 12h1v1h-1zM3 13h1v1h-1zM4 13h1v1h-1zM7 13h1v1h-1zM8 13h1v1h-1zM11 13h1v1h-1zM12 13h1v1h-1zM15 13h1v1h-1zM2 14h1v1h-1zM3 14h1v1h-1zM6 14h1v1h-1zM7 14h1v1h-1zM10 14h1v1h-1zM11 14h1v1h-1zM14 14h1v1h-1zM15 14h1v1h-1zM1 15h1v1h-1zM2 15h1v1h-1zM5 15h1v1h-1zM6 15h1v1h-1zM9 15h1v1h-1zM10 15h1v1h-1zM13 15h1v1h-1zM14 15h1v1h-1z" fill="#A7A492"/></svg>
</div></body></html>
